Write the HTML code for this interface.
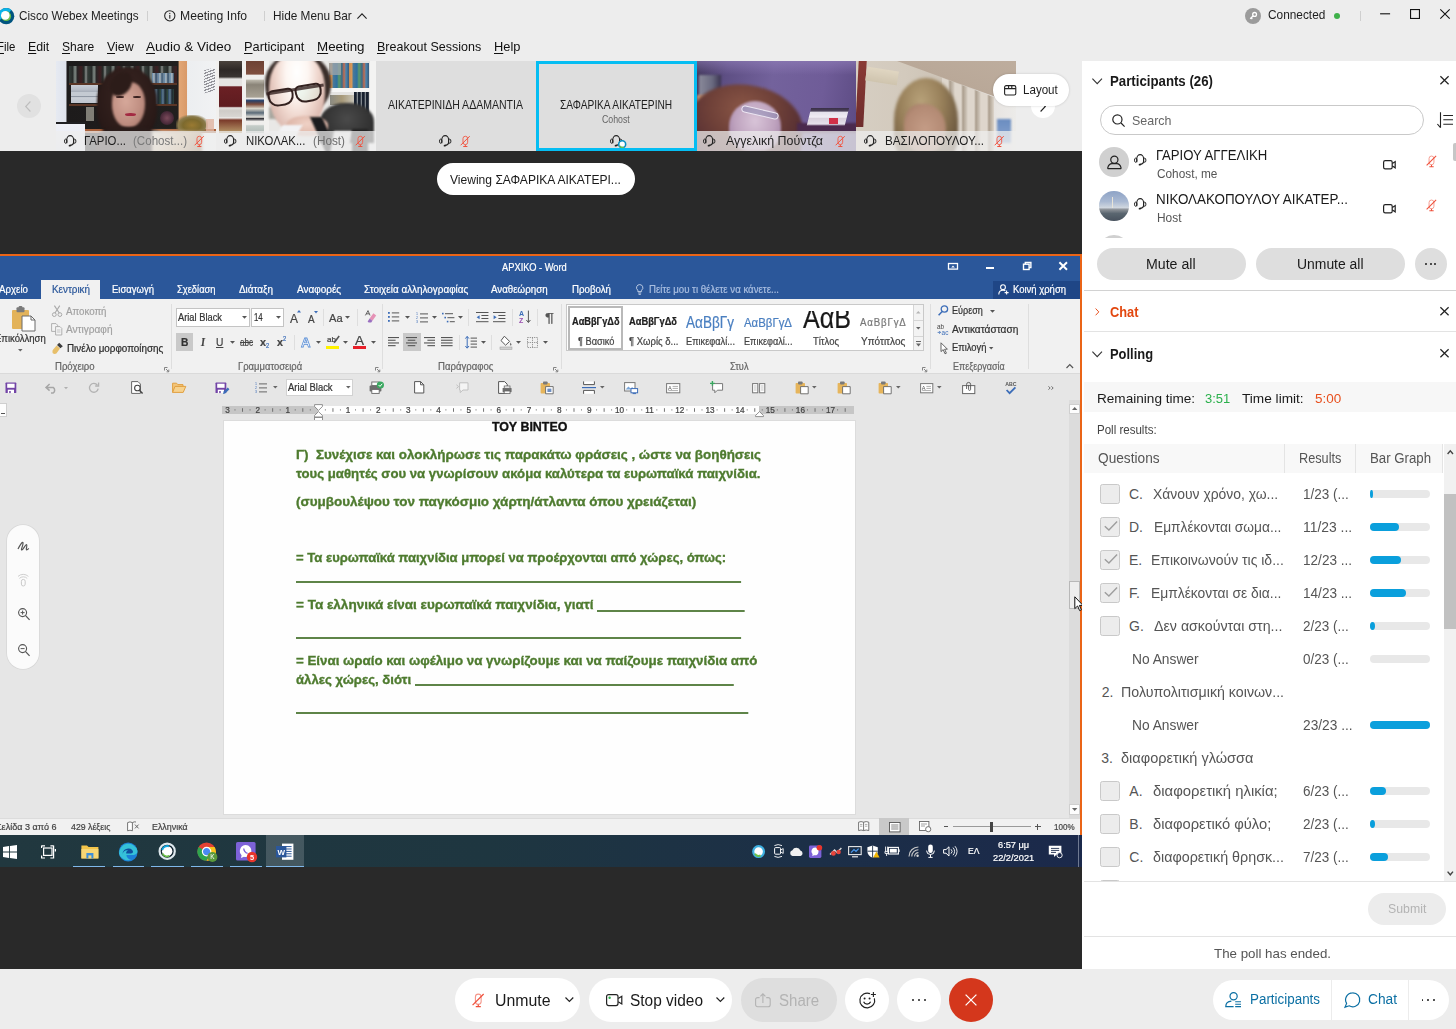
<!DOCTYPE html>
<html lang="en"><head>
<meta charset="utf-8">
<title>Cisco Webex Meetings</title>
<style>
*{box-sizing:border-box;margin:0;padding:0}
html,body{width:1456px;height:1029px;overflow:hidden;background:#ededed;font-family:"Liberation Sans",sans-serif;color:#1e1e1e}
.abs{position:absolute}
#root{position:relative;width:1456px;height:1029px;overflow:hidden;background:#ededed}
.t{position:absolute;white-space:nowrap;line-height:1}
svg{position:absolute;overflow:visible}
/* ===== top bars ===== */
#titlebar{left:0;top:0;width:1456px;height:30px}
#menubar{left:0;top:30px;width:1456px;height:31px}
#menubar .t{color:#111}
.vsep{background:#cfcfcf}
#word{filter:blur(.5px)}
.wt{color:#333;-webkit-text-stroke:.22px}
.dt{-webkit-text-stroke:.35px}
#menubar u{text-decoration-thickness:1px;text-underline-offset:1.5px}
/* ===== video strip ===== */
#strip{left:0;top:61px;width:1082px;height:90px}
.tile{position:absolute;overflow:hidden;background:#dedede}
.tile .lbl{position:absolute;left:0;bottom:0;width:100%;height:19.6px;background:rgba(238,238,238,.74)}
.ph{position:absolute;left:0;top:0;width:100%;height:100%}
/* ===== stage ===== */
#stage{left:0;top:150.6px;width:1081.8px;height:819.2px;background:#292929}
/* ===== right panel ===== */
#panel{left:1082px;top:60.8px;width:374px;height:908.6px;background:#fff}
/* ===== bottom ===== */
#bottom{left:0;top:969.4px;width:1456px;height:60px;background:#ededed}
</style>
</head>
<body>
<div id="root">


<!-- TITLEBAR -->
<div id="titlebar" class="abs">
<svg viewBox="0 0 16.4 16.4" style="position: absolute; left: -2.2px; top: 7.5px; width: 16.4px; height: 16.4px;"><circle cx="8.2" cy="8.2" r="8.1" fill="#00547f"></circle><path d="M2.61 11.43A6.45 6.45 0 0 1 12.35 3.26" fill="none" stroke="#0ab4e8" stroke-width="3.3"></path><circle cx="8.2" cy="8.2" r="4.9" fill="#6cc04a"></circle><circle cx="7.3" cy="7.4" r="4.3" fill="#fff"></circle></svg>
<span class="t" style="font-size: 12.6px; top: 9.81px; left: 19.2px; transform-origin: 0px 50%; transform: scaleX(0.93);">Cisco Webex Meetings</span>
<div class="vsep" style="position: absolute; left: 147px; top: 11px; width: 1px; height: 10px;"></div>
<svg viewBox="0 0 12 12" style="position: absolute; left: 164px; top: 10px; width: 11.6px; height: 11.6px;"><circle cx="6" cy="6" r="5.3" fill="none" stroke="#222" stroke-width="1.1"></circle><rect x="5.45" y="5.1" width="1.1" height="3.9" fill="#222"></rect><rect x="5.45" y="3" width="1.1" height="1.2" fill="#222"></rect></svg>
<span class="t" style="font-size: 12.6px; top: 9.81px; left: 180.4px; transform-origin: 0px 50%; transform: scaleX(0.968);">Meeting Info</span>
<div class="vsep" style="position: absolute; left: 264px; top: 11px; width: 1px; height: 10px;"></div>
<span class="t" style="font-size: 12.6px; top: 9.81px; left: 273.1px; transform-origin: 0px 50%; transform: scaleX(0.938);">Hide Menu Bar</span>
<svg viewBox="0 0 10 6" style="position: absolute; left: 357px; top: 13px; width: 10px; height: 6px;"><path d="M0.4 5.6L5 0.8L9.6 5.6" fill="none" stroke="#222" stroke-width="1.1"></path></svg>
<svg viewBox="0 0 16 16" style="position: absolute; left: 1245px; top: 7.8px; width: 16px; height: 16px;"><circle cx="8" cy="8" r="8" fill="#9b9b9b"></circle><circle cx="9.6" cy="6.4" r="1.9" fill="none" stroke="#fff" stroke-width="1.3"></circle><path d="M8.3 7.7L5.2 10.8M6.2 9.9L7.3 11" stroke="#fff" stroke-width="1.3" fill="none"></path></svg>
<span class="t" style="font-size: 12.8px; top: 8.9px; left: 1268.3px; transform-origin: 0px 50%; transform: scaleX(0.926);">Connected</span>
<div style="border-radius: 50%; background: rgb(63, 177, 74); position: absolute; left: 1333.8px; top: 12.8px; width: 6.4px; height: 6.4px;"></div>
<div class="vsep" style="position: absolute; left: 1360px; top: 11px; width: 1px; height: 10px;"></div>
<svg viewBox="0 0 10 10" style="position: absolute; left: 1379.8px; top: 9px; width: 10.2px; height: 10px;"><path d="M0 4.8H10" stroke="#111" stroke-width="1.1"></path></svg>
<svg viewBox="0 0 10 10" style="position: absolute; left: 1410px; top: 9px; width: 10px; height: 10px;"><rect x="0.55" y="0.55" width="8.9" height="8.9" fill="none" stroke="#111" stroke-width="1.1"></rect></svg>
<svg viewBox="0 0 10 10" style="position: absolute; left: 1439.8px; top: 9px; width: 10px; height: 10px;"><path d="M0.3 0.3L9.7 9.7M9.7 0.3L0.3 9.7" stroke="#111" stroke-width="1.1"></path></svg>
</div>

<!-- MENUBAR -->
<div id="menubar" class="abs">
<span class="t" style="font-size: 13px; top: 10.01px; left: -3.4px; transform-origin: 0px 50%; transform: scaleX(0.877);"><u>F</u>ile</span>
<span class="t" style="font-size: 13px; top: 10.01px; left: 28.3px; transform-origin: 0px 50%; transform: scaleX(0.951);"><u>E</u>dit</span>
<span class="t" style="font-size: 13px; top: 10.01px; left: 62px; transform-origin: 0px 50%; transform: scaleX(0.928);"><u>S</u>hare</span>
<span class="t" style="font-size: 13px; top: 10.01px; left: 107.1px; transform-origin: 0px 50%; transform: scaleX(0.952);"><u>V</u>iew</span>
<span class="t" style="font-size: 13px; top: 10.01px; left: 146.2px; transform-origin: 0px 50%; transform: scaleX(1.036);"><u>A</u>udio &amp; Video</span>
<span class="t" style="font-size: 13px; top: 10.01px; left: 244.2px; transform-origin: 0px 50%; transform: scaleX(0.983);"><u>P</u>articipant</span>
<span class="t" style="font-size: 13px; top: 10.01px; left: 317.3px; transform-origin: 0px 50%; transform: scaleX(1.027);"><u>M</u>eeting</span>
<span class="t" style="font-size: 13px; top: 10.01px; left: 377.3px; transform-origin: 0px 50%; transform: scaleX(0.961);"><u>B</u>reakout Sessions</span>
<span class="t" style="font-size: 13px; top: 10.01px; left: 494.2px; transform-origin: 0px 50%; transform: scaleX(0.987);"><u>H</u>elp</span>
</div>

<!-- VIDEO STRIP -->
<div id="strip" class="abs">
<div style="border-radius: 50%; background: rgb(225, 225, 225); position: absolute; left: 17px; top: 33px; width: 24px; height: 24px;"></div>
<svg viewBox="0 0 6 11" style="position: absolute; left: 25px; top: 39.5px; width: 6px; height: 11px;"><path d="M5.4 0.5L0.7 5.5L5.4 10.5" fill="none" stroke="#bdbdbd" stroke-width="1.1"></path></svg>

<div class="tile" id="tile1" style="position: absolute; left: 56.3px; top: -0.3px; width: 159.7px; height: 89.9px;">
  <div class="ph" style="background:linear-gradient(90deg,#e6eaf2 0,#dfe3ec 6.3%,#1d1b1b 6.8%,#211f1e 76.4%,#e2a776 76.8%,#d99a69 81.6%,#eceef0 82.2%,#f1f2f3 100%)"></div>
  <div class="ph" style="left:13px;top:5px;width:108px;height:17px;background:repeating-linear-gradient(90deg,#3c4a44 0,#2a302e 4px,#8a9892 5px,#9aa6a0 7px,#2b2a2a 8px,#4a2024 12px,#26302c 15px,#b4bcb8 17px,#303634 19px);opacity:.7"></div>
  <div class="ph" style="left:96px;top:12px;width:22px;height:10px;background:repeating-linear-gradient(90deg,#5a86b0 0,#c8d4dc 2px,#2f4f6f 4px,#8aa4b8 6px);opacity:.85"></div>
  <div class="ph" style="left:13px;top:22px;width:108px;height:2px;background:#5a3626"></div>
  <div class="ph" style="left:13px;top:43px;width:108px;height:2px;background:#5a3626"></div>
  <div class="ph" style="left:15px;top:24px;width:27px;height:18px;background:linear-gradient(180deg,#c9ced6 0,#b4bac4 30%,#9aa2ae 34%,#c4cad2 40%,#c4cad2 60%,#8e96a2 64%,#c9ced6 70%,#bfc5ce 100%)"></div>
  <div class="ph" style="left:98px;top:28px;width:20px;height:15px;background:repeating-linear-gradient(90deg,#2a4a6a 0,#6f94b0 2px,#1c2a34 4px,#3a5a4a 7px);opacity:.8"></div>
  <div class="ph" style="left:30px;top:46px;width:8px;height:14px;background:#a9a89c;opacity:.7"></div>
  <div class="ph" style="left:104px;top:50px;width:14px;height:14px;border-radius:50%;background:radial-gradient(circle,#7a4a5a 0,#4a2a3a 60%,rgba(40,30,30,0) 100%)"></div>
  <div class="ph" style="left:148px;top:8px;width:11px;height:23px;background:repeating-linear-gradient(170deg,#7c7c84 0,#7c7c84 1.2px,#eef0f2 1.2px,#eef0f2 2.8px);opacity:.8;transform:skewY(-12deg)"></div>
  <div class="ph" style="left:0;top:61.5px;width:29px;height:30px;background:linear-gradient(180deg,#202022 0,#202022 2px,#eef0f6 2.5px,#e8eaf2 100%)"></div>
  <div class="ph" style="left:29px;top:68px;width:131px;height:4px;background:#a8603a"></div>
  <div class="ph" style="left:120px;top:54px;width:32px;height:17px;background:radial-gradient(ellipse at 50% 60%,#9a7a32 0,#7d6a2e 40%,#8a7a4a 60%,rgba(138,122,74,0) 78%)"></div>
  <div class="ph" style="left:150px;top:58px;width:8px;height:12px;background:#e0b4a0;opacity:.8"></div>
  <div class="ph" style="left:41px;top:6px;width:60px;height:72px;border-radius:48% 48% 38% 38%;background:radial-gradient(ellipse at 50% 40%,#3a2622 0,#2a1a18 70%,#201514 100%);filter:blur(1.1px)"></div>
  <div class="ph" style="left:56px;top:21px;width:33px;height:46px;border-radius:44% 44% 50% 50%;background:radial-gradient(ellipse at 42% 42%,#d6a89a 0,#c08f82 55%,#9d6f64 100%);filter:blur(.9px)"></div>
  <div class="ph" style="left:55px;top:10px;width:20px;height:26px;border-radius:60% 40% 60% 40%;background:#2c1c19;transform:rotate(24deg);filter:blur(1px)"></div>
  <div class="ph" style="left:60px;top:35px;width:8px;height:2.4px;border-radius:50%;background:#3a2220;filter:blur(.4px)"></div>
  <div class="ph" style="left:77px;top:35px;width:8px;height:2.4px;border-radius:50%;background:#3a2220;filter:blur(.4px)"></div>
  <div class="ph" style="left:68.5px;top:52.4px;width:11px;height:3.4px;border-radius:50%;background:#a32a42;filter:blur(.3px)"></div>
  <div class="ph" style="left:40px;top:66px;width:70px;height:30px;border-radius:40% 40% 0 0;background:#2a1c1a;filter:blur(1px)"></div>
  <div class="ph" style="left:96px;top:70px;width:50px;height:22px;background:linear-gradient(120deg,#e8dcc8,#c8a880 60%,#8a6a4a);filter:blur(1.4px)"></div>
  <div class="lbl"></div>
  <svg viewBox="0 0 12.4 12.4" style="position: absolute; left: 7.70312px; top: 74.4969px; width: 12.4px; height: 12.4px;"><path d="M2.8 8.3V4.5A3.4 3.9 0 0 1 9.6 4.5V7.6Q9.4 9.8 6.6 10.4" fill="none" stroke="#222" stroke-width="1.1"></path><ellipse cx="1.7" cy="6.2" rx="1.2" ry="2.1" fill="none" stroke="#222" stroke-width="1"></ellipse><ellipse cx="10.7" cy="6.2" rx="1.2" ry="2.1" fill="none" stroke="#222" stroke-width="1"></ellipse><ellipse cx="5.9" cy="10.6" rx="1.3" ry="0.9" fill="#222" transform="rotate(-20 5.9 10.6)"></ellipse></svg>
  <span class="t" style="font-size: 13px; top: 73.61px; left: 27.7px; transform-origin: 0px 50%; transform: scaleX(0.877);">ΓΑΡΙΟ...</span>
  <span class="t" style="color: rgb(122, 122, 122); font-size: 13px; top: 73.61px; left: 76.4px; transform-origin: 0px 50%; transform: scaleX(0.89);">(Cohost...)</span>
  <svg viewBox="0 0 10 13" style="position: absolute; left: 138.303px; top: 73.8969px; width: 9px; height: 12.6px;"><rect x="2.2" y="0.9" width="5.2" height="9.3" rx="2.6" fill="none" stroke="#f0604e" stroke-width="1.05"></rect><path d="M4.8 10.3V12.2M2.5 12.3H7.1" fill="none" stroke="#ef4f3a" stroke-width="1.1"></path><path d="M9.7 0.8L-0.4 10.9" stroke="#ef4f3a" stroke-width="1.1"></path></svg>
</div>

<div class="tile" id="tile2" style="position: absolute; left: 216px; top: -0.3px; width: 160px; height: 89.9px;">
  <div class="ph" style="background:#e9e8e6"></div>
  <div class="ph" style="left:2px;top:0;width:24px;height:72px;background:linear-gradient(180deg,#4a423c 0,#2e2826 12%,#3a3432 22%,#e6e4e2 25%,#e6e4e2 34%,#6b2024 36%,#5e1c20 63%,#e2e0de 65%,#cfccc8 69%,#d8d5d2 77%,#ecebe9 79%,#7a3a2a 82%,#b89a6a 100%)"></div>
  <div class="ph" style="left:0;top:0;width:3px;height:72px;background:#f1f0ee"></div>
  <div class="ph" style="left:26px;top:0;width:4px;height:72px;background:#f1f0ee"></div>
  <div class="ph" style="left:30px;top:0;width:18px;height:72px;background:linear-gradient(180deg,#6e4234 0,#7e4e3e 18%,#efeeec 20%,#efeeec 25%,#b8b4a8 27%,#8a8478 33%,#a8a294 50%,#efeeec 52%,#26406a 55%,#7a4a3a 60%,#d8d4c8 66%,#5a6a78 72%,#e4e2dc 78%,#2a2a30 80%,#efeeec 84%,#efeeec 88%,#c4ccc8 90%,#b0bab6 100%)"></div>
  <div class="ph" style="left:48px;top:0;width:5px;height:72px;background:#f1f0ee"></div>
  <div class="ph" style="left:53px;top:46px;width:14px;height:12px;background:#a8a8a0;filter:blur(1px)"></div>
  <div class="ph" style="left:112px;top:0;width:42px;height:72px;background:#e4e3e1"></div>
  <div class="ph" style="left:113px;top:2px;width:40px;height:25px;background:repeating-linear-gradient(90deg,#c88a50 0,#d89a5a 3px,#4a7a9a 4px,#2f6f9f 8px,#5a9a6a 10px,#3a6a8a 13px,#c86a4a 15px,#4a86b0 17px,#3a5a7a 20px)"></div>
  <div class="ph" style="left:113px;top:2px;width:12px;height:12px;background:#9aa4aa;opacity:.8"></div>
  <div class="ph" style="left:112px;top:27px;width:42px;height:4.4px;background:#f6f6f5"></div>
  <div class="ph" style="left:114px;top:34px;width:24px;height:10px;background:linear-gradient(90deg,#8a8a82,#a89a7a 50%,#c8c4b8);filter:blur(.6px)"></div>
  <div class="ph" style="left:138px;top:31px;width:15px;height:22px;background:repeating-linear-gradient(90deg,#1a2230 0,#1a2230 2.4px,#d8dcdc 3px,#2a3440 4px)"></div>
  <div class="ph" style="left:154px;top:0;width:6px;height:90px;background:#f3f3f2"></div>
  <div class="ph" style="left:104px;top:42px;width:54px;height:40px;border-radius:46% 46% 0 0;background:radial-gradient(ellipse at 50% 40%,#4a4a4a 0,#333 60%,#2a2a2a 100%);filter:blur(1px)"></div>
  <div class="ph" style="left:49px;top:-8px;width:66px;height:62px;border-radius:48%;background:#3a2e2a;filter:blur(1.3px)"></div>
  <div class="ph" style="left:53px;top:-6px;width:56px;height:78px;border-radius:42% 42% 50% 50%;background:radial-gradient(ellipse at 50% 22%,#ffffff 0,#fdf6f2 28%,#f0d8cf 52%,#d8b4aa 80%,#c09a90 100%);filter:blur(1px)"></div>
  <div class="ph" style="left:52px;top:28px;width:26px;height:17px;border:2.6px solid #33211f;border-radius:5px 5px 10px 10px;transform:rotate(-9deg);background:rgba(255,255,255,.25)"></div>
  <div class="ph" style="left:79px;top:23px;width:27px;height:18px;border:2.6px solid #33211f;border-radius:5px 5px 10px 10px;transform:rotate(-9deg);background:rgba(210,240,225,.35)"></div>
  <div class="ph" style="left:50px;top:27px;width:58px;height:3px;background:#33211f;transform:rotate(-9deg);opacity:.8"></div>
  <div class="ph" style="left:78px;top:58px;width:22px;height:4px;border-radius:50%;background:#c98a8a;filter:blur(.8px)"></div>
  <div class="ph" style="left:70px;top:55px;width:42px;height:20px;border-radius:45%;background:radial-gradient(ellipse at 50% 40%,#f0d2c6 0,#dcb4a6 70%,#c49a8c 100%);filter:blur(1px)"></div>
  <div class="ph" style="left:58px;top:64px;width:20px;height:30px;background:#f2f2f4;transform:skewX(-30deg);filter:blur(.8px)"></div>
  <div class="ph" style="left:102px;top:56px;width:12px;height:36px;background:#1c1c1e;transform:skewX(24deg);filter:blur(.8px)"></div>
  <div class="ph" style="left:116px;top:70px;width:18px;height:22px;background:#e6e6e6;transform:skewX(-10deg);filter:blur(.8px)"></div>
  <div class="ph" style="left:136px;top:68px;width:16px;height:24px;background:#222;filter:blur(.8px)"></div>
  <div class="lbl"></div>
  <svg viewBox="0 0 12.4 12.4" style="position: absolute; left: 8px; top: 74.4969px; width: 12.4px; height: 12.4px;"><path d="M2.8 8.3V4.5A3.4 3.9 0 0 1 9.6 4.5V7.6Q9.4 9.8 6.6 10.4" fill="none" stroke="#222" stroke-width="1.1"></path><ellipse cx="1.7" cy="6.2" rx="1.2" ry="2.1" fill="none" stroke="#222" stroke-width="1"></ellipse><ellipse cx="10.7" cy="6.2" rx="1.2" ry="2.1" fill="none" stroke="#222" stroke-width="1"></ellipse><ellipse cx="5.9" cy="10.6" rx="1.3" ry="0.9" fill="#222" transform="rotate(-20 5.9 10.6)"></ellipse></svg>
  <span class="t" style="font-size: 13px; top: 73.61px; left: 30.3px; transform-origin: 0px 50%; transform: scaleX(0.873);">ΝΙΚΟΛΑΚ...</span>
  <span class="t" style="color: rgb(110, 110, 110); font-size: 13px; top: 73.61px; left: 96.5px; transform-origin: 0px 50%; transform: scaleX(0.904);">(Host)</span>
  <svg viewBox="0 0 10 13" style="position: absolute; left: 139.6px; top: 73.8969px; width: 9px; height: 12.6px;"><rect x="2.2" y="0.9" width="5.2" height="9.3" rx="2.6" fill="none" stroke="#f0604e" stroke-width="1.05"></rect><path d="M4.8 10.3V12.2M2.5 12.3H7.1" fill="none" stroke="#ef4f3a" stroke-width="1.1"></path><path d="M9.7 0.8L-0.4 10.9" stroke="#ef4f3a" stroke-width="1.1"></path></svg>
</div>

<div class="tile" id="tile3" style="position: absolute; left: 376px; top: -0.3px; width: 160px; height: 89.9px;">
  <span class="t" style="font-size: 12.6px; top: 38.5px; left: 12px; transform-origin: 0px 50%; transform: scaleX(0.836);">ΑΙΚΑΤΕΡΙΝΙΔΗ ΑΔΑΜΑΝΤΙΑ</span>
  <svg viewBox="0 0 12.4 12.4" style="position: absolute; left: 63px; top: 74.4969px; width: 12.4px; height: 12.4px;"><path d="M2.8 8.3V4.5A3.4 3.9 0 0 1 9.6 4.5V7.6Q9.4 9.8 6.6 10.4" fill="none" stroke="#222" stroke-width="1.1"></path><ellipse cx="1.7" cy="6.2" rx="1.2" ry="2.1" fill="none" stroke="#222" stroke-width="1"></ellipse><ellipse cx="10.7" cy="6.2" rx="1.2" ry="2.1" fill="none" stroke="#222" stroke-width="1"></ellipse><ellipse cx="5.9" cy="10.6" rx="1.3" ry="0.9" fill="#222" transform="rotate(-20 5.9 10.6)"></ellipse></svg>
  <svg viewBox="0 0 10 13" style="position: absolute; left: 84.6px; top: 73.8969px; width: 9px; height: 12.6px;"><rect x="2.2" y="0.9" width="5.2" height="9.3" rx="2.6" fill="none" stroke="#f0604e" stroke-width="1.05"></rect><path d="M4.8 10.3V12.2M2.5 12.3H7.1" fill="none" stroke="#ef4f3a" stroke-width="1.1"></path><path d="M9.7 0.8L-0.4 10.9" stroke="#ef4f3a" stroke-width="1.1"></path></svg>
</div>

<div class="tile" id="tile4" style="border: 3px solid rgb(5, 189, 242); position: absolute; left: 536px; top: -0.3px; width: 160.5px; height: 89.9px;">
  <span class="t" style="font-size: 12.6px; top: 35.5px; left: 20.8px; transform-origin: 0px 50%; transform: scaleX(0.809);">ΣΑΦΑΡΙΚΑ ΑΙΚΑΤΕΡΙΝΗ</span>
  <span class="t" style="color: rgb(102, 102, 102); font-size: 10.6px; top: 49.9px; left: 63px; transform-origin: 0px 50%; transform: scaleX(0.828);">Cohost</span>
  <svg viewBox="0 0 12.4 12.4" style="position: absolute; left: 71px; top: 71.4969px; width: 12.4px; height: 12.4px;"><path d="M2.8 8.3V4.5A3.4 3.9 0 0 1 9.6 4.5V7.6Q9.4 9.8 6.6 10.4" fill="none" stroke="#222" stroke-width="1.1"></path><ellipse cx="1.7" cy="6.2" rx="1.2" ry="2.1" fill="none" stroke="#222" stroke-width="1"></ellipse><ellipse cx="10.7" cy="6.2" rx="1.2" ry="2.1" fill="none" stroke="#222" stroke-width="1"></ellipse><ellipse cx="5.9" cy="10.6" rx="1.3" ry="0.9" fill="#222" transform="rotate(-20 5.9 10.6)"></ellipse></svg>
  <svg viewBox="0 0 8 8" style="position: absolute; left: 79px; top: 76.0969px; width: 8.4px; height: 8.4px;"><circle cx="4" cy="4" r="3.3" fill="#fff" stroke="#0a8fc0" stroke-width="1.5"></circle><path d="M1.6 5.6A3.2 3.2 0 0 0 5.5 6.8" stroke="#6cc04a" stroke-width="1.4" fill="none"></path></svg>
</div>

<div class="tile" id="tile5" style="position: absolute; left: 696.5px; top: -0.3px; width: 159.5px; height: 89.9px;">
  <div class="ph" style="background:linear-gradient(100deg,#3f3558 0,#5e4f84 18%,#73629c 45%,#6f5c98 75%,#5b4a82 100%)"></div>
  <div class="ph" style="left:0;top:0;width:160px;height:14px;background:linear-gradient(180deg,rgba(150,130,190,.55),rgba(150,130,190,0))"></div>
  <div class="ph" style="left:2px;top:14px;width:22px;height:22px;background:linear-gradient(90deg,#8a8a9a,#6a6a80 60%,#3a3450);filter:blur(1.2px)"></div>
  <div class="ph" style="left:0;top:34px;width:14px;height:8px;background:#c89878;filter:blur(1.2px)"></div>
  <div class="ph" style="left:-6px;top:24px;width:112px;height:76px;border-radius:46% 54% 20% 20%;background:radial-gradient(ellipse at 45% 32%,#8a5646 0,#6e4038 40%,#522c32 75%,#3e2430 100%);filter:blur(1.8px);transform:rotate(6deg)"></div>
  <div class="ph" style="left:32px;top:40px;width:52px;height:50px;border-radius:50% 50% 40% 40%;background:radial-gradient(ellipse at 50% 40%,#d8c4d8 0,#bea2be 55%,#94749a 100%);filter:blur(1.3px)"></div>
  <div class="ph" style="left:44px;top:48px;width:38px;height:7px;border:1.5px solid #ece6f2;border-radius:4px;transform:rotate(13deg);background:rgba(110,120,170,.35)"></div>
  <div class="ph" style="left:100px;top:62px;width:60px;height:10px;background:#4a2a4e;filter:blur(1px)"></div>
  <div class="ph" style="left:112px;top:47px;width:38px;height:17px;background:linear-gradient(180deg,#3a3048 0,#4a4058 18%,#e4e0ea 24%,#f0ecf4 55%,#d8d0dc 60%,#e8e4ee 100%);transform:skewX(-14deg);filter:blur(.7px)"></div>
  <div class="ph" style="left:132px;top:57px;width:9px;height:6px;background:#d03048;filter:blur(.5px)"></div>
  <div class="lbl"></div>
  <svg viewBox="0 0 12.4 12.4" style="position: absolute; left: 6.9px; top: 74.4969px; width: 12.4px; height: 12.4px;"><path d="M2.8 8.3V4.5A3.4 3.9 0 0 1 9.6 4.5V7.6Q9.4 9.8 6.6 10.4" fill="none" stroke="#222" stroke-width="1.1"></path><ellipse cx="1.7" cy="6.2" rx="1.2" ry="2.1" fill="none" stroke="#222" stroke-width="1"></ellipse><ellipse cx="10.7" cy="6.2" rx="1.2" ry="2.1" fill="none" stroke="#222" stroke-width="1"></ellipse><ellipse cx="5.9" cy="10.6" rx="1.3" ry="0.9" fill="#222" transform="rotate(-20 5.9 10.6)"></ellipse></svg>
  <span class="t" style="font-size: 13px; top: 73.61px; left: 29.5px; transform-origin: 0px 50%; transform: scaleX(0.955);">Αγγελική Πούντζα</span>
  <svg viewBox="0 0 10 13" style="position: absolute; left: 139.1px; top: 73.8969px; width: 9px; height: 12.6px;"><rect x="2.2" y="0.9" width="5.2" height="9.3" rx="2.6" fill="none" stroke="#f0604e" stroke-width="1.05"></rect><path d="M4.8 10.3V12.2M2.5 12.3H7.1" fill="none" stroke="#ef4f3a" stroke-width="1.1"></path><path d="M9.7 0.8L-0.4 10.9" stroke="#ef4f3a" stroke-width="1.1"></path></svg>
</div>

<div class="tile" id="tile6" style="position: absolute; left: 856px; top: -0.3px; width: 159.6px; height: 89.9px;">
  <div class="ph" style="background:linear-gradient(90deg,#d6cec2 0,#d3cabd 30%,#cbc1b4 60%,#e8e5e2 88%,#ecebe9 100%)"></div>
  <div class="ph" style="left:30px;top:-84px;width:170px;height:80px;background:linear-gradient(180deg,#c2b2a3,#b9a898);transform:rotate(20deg);transform-origin:0 100%"></div>
  <div class="ph" style="left:1px;top:0;width:8px;height:66px;background:linear-gradient(180deg,#8a3a34,#6e2c2c);transform:skewX(-3deg)"></div>
  <div class="ph" style="left:10px;top:8px;width:32px;height:14px;background:linear-gradient(180deg,#e0d6c2,#cfc4ae);transform:rotate(9deg);filter:blur(.7px)"></div>
  <div class="ph" style="left:86px;top:14px;width:52px;height:78px;background:repeating-linear-gradient(90deg,#ded6cc 0,#ded6cc 6px,#ac9f8f 8px,#c7bdb0 11px,#ded6cc 13px);clip-path:polygon(0 4%,100% 29%,100% 100%,0 100%);filter:blur(.6px)"></div>
  <div class="ph" style="left:141px;top:58px;width:14px;height:24px;background:linear-gradient(180deg,#6a8cc0,#8aa6d0);filter:blur(.9px)"></div>
  <div class="ph" style="left:38px;top:17px;width:64px;height:84px;border-radius:50% 50% 30% 30%;background:radial-gradient(ellipse at 42% 30%,#b8a27a 0,#98805a 40%,#6e5a40 75%,#54442f 100%);filter:blur(1.4px)"></div>
  <div class="ph" style="left:48px;top:43px;width:42px;height:50px;border-radius:38% 50% 50% 50%;background:radial-gradient(ellipse at 50% 50%,#c49c86 0,#b38a74 65%,#8e6a56 100%);filter:blur(1.4px)"></div>
  <div class="lbl"></div>
  <svg viewBox="0 0 12.4 12.4" style="position: absolute; left: 7.6px; top: 74.4969px; width: 12.4px; height: 12.4px;"><path d="M2.8 8.3V4.5A3.4 3.9 0 0 1 9.6 4.5V7.6Q9.4 9.8 6.6 10.4" fill="none" stroke="#222" stroke-width="1.1"></path><ellipse cx="1.7" cy="6.2" rx="1.2" ry="2.1" fill="none" stroke="#222" stroke-width="1"></ellipse><ellipse cx="10.7" cy="6.2" rx="1.2" ry="2.1" fill="none" stroke="#222" stroke-width="1"></ellipse><ellipse cx="5.9" cy="10.6" rx="1.3" ry="0.9" fill="#222" transform="rotate(-20 5.9 10.6)"></ellipse></svg>
  <span class="t" style="font-size: 13px; top: 73.61px; left: 29px; transform-origin: 0px 50%; transform: scaleX(0.898);">ΒΑΣΙΛΟΠΟΥΛΟΥ...</span>
  <svg viewBox="0 0 10 13" style="position: absolute; left: 139px; top: 73.8969px; width: 9px; height: 12.6px;"><rect x="2.2" y="0.9" width="5.2" height="9.3" rx="2.6" fill="none" stroke="#f0604e" stroke-width="1.05"></rect><path d="M4.8 10.3V12.2M2.5 12.3H7.1" fill="none" stroke="#ef4f3a" stroke-width="1.1"></path><path d="M9.7 0.8L-0.4 10.9" stroke="#ef4f3a" stroke-width="1.1"></path></svg>
</div>

<div style="border-radius: 50%; background: rgb(255, 255, 255); position: absolute; left: 1030.7px; top: 32.7px; width: 24.6px; height: 24.6px;"></div>
<svg viewBox="0 0 6 11" style="position: absolute; left: 1040px; top: 39.5px; width: 6px; height: 11px;"><path d="M0.6 0.5L5.3 5.5L0.6 10.5" fill="none" stroke="#222" stroke-width="1.1"></path></svg>
<div style="border-radius: 16px; background: rgb(255, 255, 255); box-shadow: rgba(0, 0, 0, 0.18) 0px 0px 2.5px; position: absolute; left: 992.7px; top: 13px; width: 76.3px; height: 32.2px;"></div>
<svg viewBox="0 0 12.4 10.6" style="position: absolute; left: 1004px; top: 23.6px; width: 12.4px; height: 10.6px;"><rect x="0.6" y="0.6" width="11.2" height="9.4" rx="1.6" fill="none" stroke="#222" stroke-width="1.1"></rect><path d="M0.6 3.6H11.8M4.6 0.6V3.6M7.8 0.6V3.6" stroke="#222" stroke-width="1.1"></path></svg>
<span class="t" style="font-size: 12.8px; top: 23.4px; left: 1022.7px; transform-origin: 0px 50%; transform: scaleX(0.905);">Layout</span>
</div>

<!-- STAGE -->
<div id="stage" class="abs">
<div style="background: rgb(255, 255, 255); border-radius: 16px; position: absolute; left: 437px; top: 12.4062px; width: 198px; height: 32px;"></div>
<span class="t" style="color: rgb(26, 26, 26); font-size: 12.8px; top: 23.22px; left: 450.2px; transform-origin: 0px 50%; transform: scaleX(0.943);">Viewing ΣΑΦΑΡΙΚΑ ΑΙΚΑΤΕΡΙ...</span>
<!-- WORD -->
<div id="word" style="overflow: hidden; position: absolute; left: 0px; top: 102.406px; width: 1082px; height: 615px;">
<div style="background: rgb(43, 87, 154); position: absolute; left: 0px; top: 2.6px; width: 1080px; height: 43.9px;"></div>
<span class="t wt" style="color: rgb(255, 255, 255); font-size: 10.8px; top: 8.6px; left: 502.4px; transform-origin: 0px 50%; transform: scaleX(0.863);">ΑΡΧΙΚΟ - Word</span>
<svg viewBox="0 0 10 6.6" style="position: absolute; left: 948px; top: 10px; width: 10px; height: 6.6px;"><rect x="0.5" y="0.5" width="9" height="5.6" fill="none" stroke="#fff" stroke-width="1.3"></rect><path d="M3.2 4.4L5 2.4L6.8 4.4Z" fill="#fff"></path></svg>
<div style="background: rgb(255, 255, 255); position: absolute; left: 986px; top: 14.4px; width: 8px; height: 1.8px;"></div>
<svg viewBox="0 0 8.4 8" style="position: absolute; left: 1022.6px; top: 9px; width: 8.4px; height: 8px;"><rect x="0.5" y="2.2" width="5.6" height="5.3" fill="none" stroke="#fff" stroke-width="1.4"></rect><path d="M2.3 2.2V0.5H7.9V5.6H6.1" fill="none" stroke="#fff" stroke-width="1.4"></path></svg>
<svg viewBox="0 0 8.4 8" style="position: absolute; left: 1059.4px; top: 9px; width: 8.4px; height: 8px;"><path d="M0.4 0.3L8 7.7M8 0.3L0.4 7.7" stroke="#fff" stroke-width="2"></path></svg>
<!-- tabs -->
<div style="background: rgb(241, 241, 241); position: absolute; left: 41.3px; top: 27.2px; width: 59.1px; height: 19.8px;"></div>
<span class="t wt" style="color: rgb(255, 255, 255); font-size: 11px; top: 31.5px; left: -0.6px; transform-origin: 0px 50%; transform: scaleX(0.883);">Αρχείο</span>
<span class="t wt" style="color: rgb(43, 87, 154); font-size: 11px; top: 31.5px; left: 51.5px; transform-origin: 0px 50%; transform: scaleX(0.896);">Κεντρική</span>
<span class="t wt" style="color: rgb(255, 255, 255); font-size: 11px; top: 31.5px; left: 112.3px; transform-origin: 0px 50%; transform: scaleX(0.866);">Εισαγωγή</span>
<span class="t wt" style="color: rgb(255, 255, 255); font-size: 11px; top: 31.5px; left: 177.3px; transform-origin: 0px 50%; transform: scaleX(0.85);">Σχεδίαση</span>
<span class="t wt" style="color: rgb(255, 255, 255); font-size: 11px; top: 31.5px; left: 239px; transform-origin: 0px 50%; transform: scaleX(0.901);">Διάταξη</span>
<span class="t wt" style="color: rgb(255, 255, 255); font-size: 11px; top: 31.5px; left: 297px; transform-origin: 0px 50%; transform: scaleX(0.907);">Αναφορές</span>
<span class="t wt" style="color: rgb(255, 255, 255); font-size: 11px; top: 31.5px; left: 363.7px; transform-origin: 0px 50%; transform: scaleX(0.9);">Στοιχεία αλληλογραφίας</span>
<span class="t wt" style="color: rgb(255, 255, 255); font-size: 11px; top: 31.5px; left: 491.2px; transform-origin: 0px 50%; transform: scaleX(0.886);">Αναθεώρηση</span>
<span class="t wt" style="color: rgb(255, 255, 255); font-size: 11px; top: 31.5px; left: 572px; transform-origin: 0px 50%; transform: scaleX(0.883);">Προβολή</span>
<svg viewBox="0 0 7.4 11" style="position: absolute; left: 635.6px; top: 31px; width: 7.4px; height: 11px;"><path d="M3.7 0.6A3.1 3.1 0 0 0 1.8 6.2V7.6H5.6V6.2A3.1 3.1 0 0 0 3.7 0.6Z" fill="none" stroke="#c9d6ea" stroke-width="0.9"></path><path d="M2.2 9H5.2M2.6 10.4H4.8" stroke="#c9d6ea" stroke-width="0.9"></path></svg>
<span class="t wt" style="color: rgb(169, 190, 224); font-size: 10.6px; top: 31.51px; left: 648.7px; transform-origin: 0px 50%; transform: scaleX(0.911);">Πείτε μου τι θέλετε να κάνετε...</span>
<div style="background: rgb(31, 70, 134); position: absolute; left: 992.6px; top: 27.7px; width: 87.4px; height: 18.8px;"></div>
<svg viewBox="0 0 11 11" style="position: absolute; left: 998px; top: 31.5px; width: 11px; height: 11px;"><circle cx="5" cy="3.2" r="2.4" fill="none" stroke="#fff" stroke-width="1.1"></circle><path d="M0.8 10.4C0.8 7.4 2.6 6.2 5 6.2C6 6.2 6.8 6.4 7.4 6.8" fill="none" stroke="#fff" stroke-width="1.1"></path><path d="M8.6 6.6V10.6M6.6 8.6H10.6" stroke="#fff" stroke-width="1.1"></path></svg>
<span class="t wt" style="color: rgb(255, 255, 255); font-size: 11px; top: 31.5px; left: 1013px; transform-origin: 0px 50%; transform: scaleX(0.862);">Κοινή χρήση</span>

<!-- ribbon -->
<div style="background: rgb(241, 241, 241); position: absolute; left: 0px; top: 46.5px; width: 1080px; height: 74.9px;"></div>
<div style="background: rgb(218, 218, 218); position: absolute; left: 0px; top: 119.8px; width: 1080px; height: 1px;"></div>
<div style="background: rgb(230, 230, 230); position: absolute; left: 0px; top: 120.6px; width: 1080px; height: 26.8px;"></div>
<!--RIBBON-ITEMS-->
<svg viewBox="0 0 25 25" style="position: absolute; left: 11px; top: 53px; width: 25px; height: 25px;"><rect x="1" y="4" width="17" height="19" rx="1" fill="#e3b35a"></rect><rect x="5.5" y="1.2" width="8" height="5" rx="1" fill="#7a7a7a"></rect><rect x="7.6" y="0" width="3.8" height="2.6" rx="1" fill="#7a7a7a"></rect><path d="M11 10H20L24 14V25H11Z" fill="#fff" stroke="#6a6a6a" stroke-width="1"></path><path d="M20 10V14H24" fill="none" stroke="#6a6a6a" stroke-width="1"></path></svg>
<span class="t wt" style="color: rgb(51, 51, 51); font-size: 10.8px; top: 80.01px; left: -5px; transform-origin: 0px 50%; transform: scaleX(0.882);">Επικόλληση</span>
<svg viewBox="0 0 4.6 2.4" style="position: absolute; left: 18.3px; top: 96.4px; width: 4.6px; height: 2.4px;"><path d="M0 0H4.6L2.3 2.4Z" fill="#666"></path></svg>
<svg viewBox="0 0 10.3 12" style="position: absolute; left: 51.7px; top: 52px; width: 10.3px; height: 12px;"><path d="M2.4 0.6L7.4 8.2M7.8 0.6L2.8 8.2" stroke="#a9a9a9" stroke-width="1.1" fill="none"></path><circle cx="2.3" cy="9.6" r="1.9" fill="none" stroke="#a9a9a9" stroke-width="1"></circle><circle cx="7.9" cy="9.6" r="1.9" fill="none" stroke="#a9a9a9" stroke-width="1"></circle></svg>
<span class="t wt" style="color: rgb(162, 162, 162); font-size: 10.6px; top: 52.6px; left: 66px; transform-origin: 0px 50%; transform: scaleX(0.916);">Αποκοπή</span>
<svg viewBox="0 0 11.5 12.5" style="position: absolute; left: 51px; top: 70.5px; width: 11.5px; height: 12.5px;"><path d="M0.6 0.6H5L6.6 2.2V8.4H0.6Z" fill="#f4f4f4" stroke="#a9a9a9" stroke-width="0.9"></path><path d="M4.6 3.6H9L10.8 5.4V12H4.6Z" fill="#f4f4f4" stroke="#a9a9a9" stroke-width="0.9"></path><path d="M6 7H9.4M6 9H9.4" stroke="#b9b9b9" stroke-width="0.8"></path></svg>
<span class="t wt" style="color: rgb(162, 162, 162); font-size: 10.6px; top: 71.21px; left: 66px; transform-origin: 0px 50%; transform: scaleX(0.95);">Αντιγραφή</span>
<svg viewBox="0 0 11.5 13" style="position: absolute; left: 51.7px; top: 89px; width: 11.5px; height: 13px;"><path d="M7.2 0.8L10.8 4.2L8.4 6.2L5 3Z" fill="#3d3d3d"></path><path d="M4.6 3.4L8 6.6L4.4 11.6Q2.2 12.6 0.6 11Q0 8.6 1.2 7.6Z" fill="#e7bf6a"></path></svg>
<span class="t wt" style="color: rgb(43, 43, 43); font-size: 10.6px; top: 90.01px; left: 66.7px; transform-origin: 0px 50%; transform: scaleX(0.931);">Πινέλο μορφοποίησης</span>
<span class="t wt" style="color: rgb(102, 102, 102); font-size: 10.4px; top: 109.01px; left: 55px; transform-origin: 0px 50%; transform: scaleX(0.919);">Πρόχειρο</span>
<svg viewBox="0 0 5.0 5" style="position: absolute; left: 163.6px; top: 114px; width: 5px; height: 5px;"><path d="M0.5 3.5V0.5H3.5" fill="none" stroke="#777" stroke-width="0.9"></path><path d="M2 2L4.6 4.6M4.8 2.6V4.8H2.6" fill="none" stroke="#777" stroke-width="0.9"></path></svg>
<div style="background: rgb(222, 222, 222); position: absolute; left: 171px; top: 51px; width: 1px; height: 65px;"></div>
<div style="background: rgb(255, 255, 255); border: 1px solid rgb(196, 196, 196); position: absolute; left: 175.5px; top: 55px; width: 74px; height: 19px;"></div>
<span class="t wt" style="color: rgb(51, 51, 51); font-size: 10.8px; top: 59.21px; left: 178px; transform-origin: 0px 50%; transform: scaleX(0.862);">Arial Black</span>
<svg viewBox="0 0 5.0 2.8" style="position: absolute; left: 242.1px; top: 63.4px; width: 5px; height: 2.8px;"><path d="M0 0H5L2.5 2.8Z" fill="#555"></path></svg>
<div style="background: rgb(255, 255, 255); border: 1px solid rgb(196, 196, 196); position: absolute; left: 250.6px; top: 55px; width: 33.8px; height: 19px;"></div>
<span class="t wt" style="color: rgb(51, 51, 51); font-size: 10.8px; top: 59.21px; left: 253.8px; transform-origin: 0px 50%; transform: scaleX(0.724);">14</span>
<svg viewBox="0 0 5.0 2.8" style="position: absolute; left: 276.1px; top: 63.4px; width: 5px; height: 2.8px;"><path d="M0 0H5L2.5 2.8Z" fill="#555"></path></svg>
<span class="t wt" style="color: rgb(68, 68, 68); font-size: 12.5px; top: 60.01px; left: 290px; transform-origin: 0px 50%; transform: scaleX(0.959);">A</span>
<svg viewBox="0 0 4 2.5" style="position: absolute; left: 297px; top: 57.5px; width: 4px; height: 2.5px;"><path d="M0 2.5L2 0L4 2.5Z" fill="#3c6db8"></path></svg>
<span class="t wt" style="color: rgb(68, 68, 68); font-size: 10.5px; top: 61px; left: 307.6px; transform-origin: 0px 50%; transform: scaleX(0.941);">A</span>
<svg viewBox="0 0 4.0 2.5" style="position: absolute; left: 313.6px; top: 58.5px; width: 4px; height: 2.5px;"><path d="M0 0L2 2.5L4 0Z" fill="#3c6db8"></path></svg>
<div style="background: rgb(222, 222, 222); position: absolute; left: 323px; top: 56px; width: 1px; height: 17px;"></div>
<span class="t wt" style="color: rgb(68, 68, 68); font-size: 11.5px; top: 60.41px; left: 329.2px; transform-origin: 0px 50%; transform: scaleX(0.966);">Aa</span>
<svg viewBox="0 0 5.0 2.8" style="position: absolute; left: 345.3px; top: 63.4px; width: 5px; height: 2.8px;"><path d="M0 0H5L2.5 2.8Z" fill="#555"></path></svg>
<div style="background: rgb(222, 222, 222); position: absolute; left: 357px; top: 56px; width: 1px; height: 17px;"></div>
<svg viewBox="0 0 11.5 14" style="position: absolute; left: 364.5px; top: 57px; width: 11.5px; height: 14px;"><path d="M4.6 8.6L8.4 3.2L11.2 5.4L7.4 10.8Z" fill="#e592b6"></path><path d="M4.6 8.6L7.4 10.8L6.2 12.4H3.6L2.6 11.4Z" fill="#9a6fc0"></path><path d="M0.4 5.4L3 0.6L5 5.4M1.2 3.8H4.2" fill="none" stroke="#555" stroke-width="0.9"></path></svg>
<div style="background: rgb(222, 222, 222); position: absolute; left: 381.7px; top: 51px; width: 1px; height: 65px;"></div>
<div style="background: rgb(201, 201, 201); position: absolute; left: 175.5px; top: 80.2px; width: 17.5px; height: 18px;"></div>
<span class="t wt" style="color: rgb(51, 51, 51); font-weight: bold; font-size: 11.4px; top: 84.42px; left: 180.6px; transform-origin: 0px 50%; transform: scaleX(0.899);">B</span>
<span class="t wt" style="color: rgb(68, 68, 68); font-style: italic; font-family: &quot;Liberation Serif&quot;, serif; font-weight: bold; font-size: 11.6px; top: 84.4px; left: 200.8px; transform-origin: 0px 50%; transform: scaleX(0.886);">I</span>
<span class="t wt" style="color: rgb(68, 68, 68); text-decoration: underline; font-size: 11px; top: 84px; left: 215.6px; transform-origin: 0px 50%; transform: scaleX(0.93);">U</span>
<svg viewBox="0 0 5.0 2.8" style="position: absolute; left: 230px; top: 88.2px; width: 5px; height: 2.8px;"><path d="M0 0H5L2.5 2.8Z" fill="#555"></path></svg>
<span class="t wt" style="color: rgb(68, 68, 68); text-decoration: line-through; font-size: 10.2px; top: 84.61px; left: 240px; transform-origin: 0px 50%; transform: scaleX(0.791);">abc</span>
<span class="t wt" style="color: rgb(68, 68, 68); font-weight: bold; font-size: 11px; top: 84px; left: 259.6px; transform-origin: 0px 50%; transform: scaleX(0.98);">x</span>
<span class="t wt" style="color: rgb(60, 109, 184); font-size: 6.5px; top: 90.41px; left: 266px; transform-origin: 0px 50%; transform: scaleX(0.883);">2</span>
<span class="t wt" style="color: rgb(68, 68, 68); font-weight: bold; font-size: 11px; top: 84px; left: 276.8px; transform-origin: 0px 50%; transform: scaleX(0.98);">x</span>
<span class="t wt" style="color: rgb(60, 109, 184); font-size: 6.5px; top: 83.41px; left: 283.2px; transform-origin: 0px 50%; transform: scaleX(0.883);">2</span>
<div style="background: rgb(222, 222, 222); position: absolute; left: 293.6px; top: 82px; width: 1px; height: 15px;"></div>
<span class="t wt" style="color: rgb(255, 255, 255); -webkit-text-stroke: 0.8px rgb(91, 143, 214); font-weight: bold; font-size: 13.6px; top: 83px; left: 301px; transform-origin: 0px 50%; transform: scaleX(0.977);">A</span>
<svg viewBox="0 0 5.0 2.8" style="position: absolute; left: 315.5px; top: 88.2px; width: 5px; height: 2.8px;"><path d="M0 0H5L2.5 2.8Z" fill="#555"></path></svg>
<span class="t wt" style="color: rgb(68, 68, 68); font-size: 8px; top: 83.01px; left: 327px; transform-origin: 0px 50%; transform: scaleX(1.011);">ab</span>
<svg viewBox="0 0 7 9.4" style="position: absolute; left: 333px; top: 81.6px; width: 7px; height: 9.4px;"><path d="M5.6 0.4L6.8 1.6L2.4 7.6L0.6 8.6L1 6.6Z" fill="#555"></path></svg>
<div style="background: rgb(255, 242, 0); position: absolute; left: 325.6px; top: 92.6px; width: 13.8px; height: 3.2px;"></div>
<svg viewBox="0 0 5.0 2.8" style="position: absolute; left: 343.3px; top: 88.2px; width: 5px; height: 2.8px;"><path d="M0 0H5L2.5 2.8Z" fill="#555"></path></svg>
<span class="t wt" style="color: rgb(68, 68, 68); font-size: 12.4px; top: 81.61px; left: 355px; transform-origin: 0px 50%; transform: scaleX(1.089);">A</span>
<div style="background: rgb(232, 32, 42); position: absolute; left: 353px; top: 93px; width: 13.4px; height: 3.2px;"></div>
<svg viewBox="0 0 5.0 2.8" style="position: absolute; left: 370.5px; top: 88.2px; width: 5px; height: 2.8px;"><path d="M0 0H5L2.5 2.8Z" fill="#555"></path></svg>
<span class="t wt" style="color: rgb(102, 102, 102); font-size: 10.4px; top: 109.01px; left: 238px; transform-origin: 0px 50%; transform: scaleX(0.909);">Γραμματοσειρά</span>
<svg viewBox="0 0 5.0 5" style="position: absolute; left: 374.6px; top: 114px; width: 5px; height: 5px;"><path d="M0.5 3.5V0.5H3.5" fill="none" stroke="#777" stroke-width="0.9"></path><path d="M2 2L4.6 4.6M4.8 2.6V4.8H2.6" fill="none" stroke="#777" stroke-width="0.9"></path></svg>
<svg viewBox="0 0 11.2 10.0" style="position: absolute; left: 388px; top: 59.4px; width: 11.2px; height: 10px;"><rect x="0" y="0" width="1.8" height="1.8" fill="#3c6db8"></rect><rect x="3.8" y="0.4" width="7.4" height="1" fill="#555"></rect><rect x="0" y="4" width="1.8" height="1.8" fill="#3c6db8"></rect><rect x="3.8" y="4.4" width="7.4" height="1" fill="#555"></rect><rect x="0" y="8" width="1.8" height="1.8" fill="#3c6db8"></rect><rect x="3.8" y="8.4" width="7.4" height="1" fill="#555"></rect></svg>
<svg viewBox="0 0 5.0 2.8" style="position: absolute; left: 404.5px; top: 63.4px; width: 5px; height: 2.8px;"><path d="M0 0H5L2.5 2.8Z" fill="#555"></path></svg>
<svg viewBox="0 0 12.0 11.4" style="position: absolute; left: 415.5px; top: 58.6px; width: 12px; height: 11.4px;"><text x="0" y="3.2" font-size="3.6" fill="#3c6db8" font-family="Liberation Sans,sans-serif">1</text><text x="0" y="7.4" font-size="3.6" fill="#3c6db8" font-family="Liberation Sans,sans-serif">2</text><text x="0" y="11.4" font-size="3.6" fill="#3c6db8" font-family="Liberation Sans,sans-serif">3</text><rect x="4" y="1.4" width="8" height="1" fill="#555"></rect><rect x="4" y="5.4" width="8" height="1" fill="#555"></rect><rect x="4" y="9.4" width="8" height="1" fill="#555"></rect></svg>
<svg viewBox="0 0 5.0 2.8" style="position: absolute; left: 431.5px; top: 63.4px; width: 5px; height: 2.8px;"><path d="M0 0H5L2.5 2.8Z" fill="#555"></path></svg>
<svg viewBox="0 0 12.8 11.4" style="position: absolute; left: 441.7px; top: 58.6px; width: 12.8px; height: 11.4px;"><rect x="0" y="0.8" width="1.6" height="1.6" fill="#3c6db8"></rect><rect x="3" y="1.2" width="8" height="1" fill="#555"></rect><rect x="2.4" y="4.8" width="1.6" height="1.6" fill="#3c6db8"></rect><rect x="5.4" y="5.2" width="7" height="1" fill="#555"></rect><rect x="4.8" y="8.8" width="1.6" height="1.6" fill="#3c6db8"></rect><rect x="7.8" y="9.2" width="5" height="1" fill="#555"></rect></svg>
<svg viewBox="0 0 5.0 2.8" style="position: absolute; left: 458px; top: 63.4px; width: 5px; height: 2.8px;"><path d="M0 0H5L2.5 2.8Z" fill="#555"></path></svg>
<div style="background: rgb(222, 222, 222); position: absolute; left: 467.6px; top: 56px; width: 1px; height: 17px;"></div>
<svg viewBox="0 0 12.5 10.4" style="position: absolute; left: 475.5px; top: 59.4px; width: 12.5px; height: 10.4px;"><path d="M3.6 3.2L0.6 5.2L3.6 7.2Z" fill="#3c6db8"></path><rect x="0" y="0" width="12.5" height="1" fill="#555"></rect><rect x="5.4" y="3" width="7" height="1" fill="#555"></rect><rect x="5.4" y="6" width="7" height="1" fill="#555"></rect><rect x="0" y="9.2" width="12.5" height="1" fill="#555"></rect></svg>
<svg viewBox="0 0 12.5 10.4" style="position: absolute; left: 493.2px; top: 59.4px; width: 12.5px; height: 10.4px;"><path d="M0.6 3.2L3.6 5.2L0.6 7.2Z" fill="#3c6db8"></path><rect x="0" y="0" width="12.5" height="1" fill="#555"></rect><rect x="5.4" y="3" width="7" height="1" fill="#555"></rect><rect x="5.4" y="6" width="7" height="1" fill="#555"></rect><rect x="0" y="9.2" width="12.5" height="1" fill="#555"></rect></svg>
<div style="background: rgb(222, 222, 222); position: absolute; left: 512px; top: 56px; width: 1px; height: 17px;"></div>
<svg viewBox="0 0 12.4 13.6" style="position: absolute; left: 518.6px; top: 57.4px; width: 12.4px; height: 13.6px;"><text x="0" y="6" font-size="7" font-weight="bold" fill="#3c6db8" font-family="Liberation Sans,sans-serif">A</text><text x="0" y="13" font-size="7" font-weight="bold" fill="#9a4fb0" font-family="Liberation Sans,sans-serif">Z</text><path d="M9.4 0.6V12M7.4 10L9.4 12.6L11.4 10" fill="none" stroke="#555" stroke-width="1"></path></svg>
<div style="background: rgb(222, 222, 222); position: absolute; left: 537.3px; top: 56px; width: 1px; height: 17px;"></div>
<span class="t wt" style="color: rgb(85, 85, 85); font-size: 13px; top: 58.01px; left: 544.6px; transform-origin: 0px 50%; transform: scaleX(1.289);">¶</span>
<svg viewBox="0 0 11 10.8" style="position: absolute; left: 388px; top: 84.4px; width: 11px; height: 10.8px;"><rect x="0" y="0.0" width="11" height="1.1" fill="#555"></rect><rect x="0" y="2.7" width="7.6" height="1.1" fill="#555"></rect><rect x="0" y="5.4" width="11" height="1.1" fill="#555"></rect><rect x="0" y="8.100000000000001" width="7.6" height="1.1" fill="#555"></rect></svg>
<div style="background: rgb(201, 201, 201); position: absolute; left: 403px; top: 80.2px; width: 17.8px; height: 18px;"></div>
<svg viewBox="0 0 11.0 10.8" style="position: absolute; left: 406.4px; top: 84.4px; width: 11px; height: 10.8px;"><rect x="0.0" y="0.0" width="11" height="1.1" fill="#555"></rect><rect x="1.7000000000000002" y="2.7" width="7.6" height="1.1" fill="#555"></rect><rect x="0.0" y="5.4" width="11" height="1.1" fill="#555"></rect><rect x="1.7000000000000002" y="8.100000000000001" width="7.6" height="1.1" fill="#555"></rect></svg>
<svg viewBox="0 0 11.0 10.8" style="position: absolute; left: 423.6px; top: 84.4px; width: 11px; height: 10.8px;"><rect x="0" y="0.0" width="11" height="1.1" fill="#555"></rect><rect x="3.4000000000000004" y="2.7" width="7.6" height="1.1" fill="#555"></rect><rect x="0" y="5.4" width="11" height="1.1" fill="#555"></rect><rect x="3.4000000000000004" y="8.100000000000001" width="7.6" height="1.1" fill="#555"></rect></svg>
<svg viewBox="0 0 11.6 10.8" style="position: absolute; left: 441px; top: 84.4px; width: 11.6px; height: 10.8px;"><rect x="0" y="0.0" width="11.6" height="1.1" fill="#555"></rect><rect x="0" y="2.7" width="11.6" height="1.1" fill="#555"></rect><rect x="0" y="5.4" width="11.6" height="1.1" fill="#555"></rect><rect x="0" y="8.100000000000001" width="11.6" height="1.1" fill="#555"></rect></svg>
<div style="background: rgb(222, 222, 222); position: absolute; left: 459.3px; top: 82px; width: 1px; height: 15px;"></div>
<svg viewBox="0 0 12 13" style="position: absolute; left: 465px; top: 83px; width: 12px; height: 13px;"><path d="M2.2 0.6V12M0.4 2.6L2.2 0.4L4 2.6M0.4 10L2.2 12.2L4 10" fill="none" stroke="#3c6db8" stroke-width="1"></path><rect x="5.6" y="1.6" width="6.4" height="1" fill="#555"></rect><rect x="5.6" y="4.6" width="6.4" height="1" fill="#555"></rect><rect x="5.6" y="7.6" width="6.4" height="1" fill="#555"></rect><rect x="5.6" y="10.6" width="6.4" height="1" fill="#555"></rect></svg>
<svg viewBox="0 0 5.0 2.8" style="position: absolute; left: 480.5px; top: 88.2px; width: 5px; height: 2.8px;"><path d="M0 0H5L2.5 2.8Z" fill="#555"></path></svg>
<div style="background: rgb(222, 222, 222); position: absolute; left: 491px; top: 82px; width: 1px; height: 15px;"></div>
<svg viewBox="0 0 12.4 14.6" style="position: absolute; left: 500px; top: 82px; width: 12.4px; height: 14.6px;"><path d="M4.4 1.2L9.6 6.4L5.6 10.2L1 5.6Z" fill="#fff" stroke="#555" stroke-width="1"></path><path d="M10.6 7.4Q12.2 9.6 11 10.6Q9.6 10.4 10.6 7.4Z" fill="#555"></path><rect x="0" y="12" width="12" height="2.4" fill="#cfcfcf" stroke="#999" stroke-width="0.5"></rect></svg>
<svg viewBox="0 0 5.0 2.8" style="position: absolute; left: 515.5px; top: 88.2px; width: 5px; height: 2.8px;"><path d="M0 0H5L2.5 2.8Z" fill="#555"></path></svg>
<svg viewBox="0 0 11 11.0" style="position: absolute; left: 527px; top: 83.6px; width: 11px; height: 11px;"><rect x="0.5" y="0.5" width="10" height="10" fill="none" stroke="#888" stroke-width="0.9" stroke-dasharray="1.2 1"></rect><path d="M5.5 0.5V10.5M0.5 5.5H10.5" stroke="#888" stroke-width="0.9" stroke-dasharray="1.2 1"></path></svg>
<svg viewBox="0 0 5.0 2.8" style="position: absolute; left: 543.1px; top: 88.2px; width: 5px; height: 2.8px;"><path d="M0 0H5L2.5 2.8Z" fill="#555"></path></svg>
<span class="t wt" style="color: rgb(102, 102, 102); font-size: 10.4px; top: 109.01px; left: 437.6px; transform-origin: 0px 50%; transform: scaleX(0.922);">Παράγραφος</span>
<svg viewBox="0 0 5.0 5" style="position: absolute; left: 552.6px; top: 114px; width: 5px; height: 5px;"><path d="M0.5 3.5V0.5H3.5" fill="none" stroke="#777" stroke-width="0.9"></path><path d="M2 2L4.6 4.6M4.8 2.6V4.8H2.6" fill="none" stroke="#777" stroke-width="0.9"></path></svg>
<div style="background: rgb(222, 222, 222); position: absolute; left: 561.4px; top: 51px; width: 1px; height: 65px;"></div>
<div style="background: rgb(255, 255, 255); border: 1px solid rgb(201, 201, 201); position: absolute; left: 566.2px; top: 51.4px; width: 358.2px; height: 47px;"></div>
<div style="border: 2px solid rgb(185, 185, 185); background: rgb(255, 255, 255); position: absolute; left: 568px; top: 53px; width: 55.4px; height: 43.6px;"></div>
<span class="t wt" style="color: rgb(34, 34, 34); font-weight: bold; font-size: 10px; top: 64px; left: 572px; transform-origin: 0px 50%; transform: scaleX(0.922);">ΑαΒβΓγΔδ</span>
<span class="t wt" style="color: rgb(68, 68, 68); font-size: 10.4px; top: 83.62px; left: 577.5px; transform-origin: 0px 50%; transform: scaleX(0.891);">¶ Βασικό</span>
<span class="t wt" style="color: rgb(34, 34, 34); font-weight: bold; font-size: 10px; top: 64px; left: 629px; transform-origin: 0px 50%; transform: scaleX(0.931);">ΑαΒβΓγΔδ</span>
<span class="t wt" style="color: rgb(68, 68, 68); font-size: 10.4px; top: 83.62px; left: 628.5px; transform-origin: 0px 50%; transform: scaleX(0.915);">¶ Χωρίς δ...</span>
<span class="t wt" style="color: rgb(74, 127, 192); font-size: 16.6px; top: 61.6px; left: 686px; transform-origin: 0px 50%; transform: scaleX(0.817);">ΑαΒβΓγ</span>
<span class="t wt" style="color: rgb(68, 68, 68); font-size: 10.4px; top: 83.62px; left: 686px; transform-origin: 0px 50%; transform: scaleX(0.888);">Επικεφαλί...</span>
<span class="t wt" style="color: rgb(74, 127, 192); font-size: 13.4px; top: 62.61px; left: 744px; transform-origin: 0px 50%; transform: scaleX(0.852);">ΑαΒβΓγΔ</span>
<span class="t wt" style="color: rgb(68, 68, 68); font-size: 10.4px; top: 83.62px; left: 743.6px; transform-origin: 0px 50%; transform: scaleX(0.878);">Επικεφαλί...</span>
<div style="overflow: hidden; position: absolute; left: 800px; top: 57.6px; width: 53px; height: 19.4px;"><span class="t wt" style="color: rgb(26, 26, 26); font-size: 29px; top: -7px; left: 2.5px; transform-origin: 0px 50%; transform: scaleX(0.866);">ΑαΒ</span></div>
<span class="t wt" style="color: rgb(68, 68, 68); font-size: 10.4px; top: 83.62px; left: 813px; transform-origin: 0px 50%; transform: scaleX(0.909);">Τίτλος</span>
<span class="t wt" style="color: rgb(119, 119, 119); letter-spacing: 1px; font-size: 11.4px; top: 64.01px; left: 860px; transform-origin: 0px 50%; transform: scaleX(0.85);">ΑαΒβΓγΔ</span>
<span class="t wt" style="color: rgb(68, 68, 68); font-size: 10.4px; top: 83.62px; left: 861.3px; transform-origin: 0px 50%; transform: scaleX(0.961);">Υπότιτλος</span>
<div style="background: rgb(243, 243, 243); border-left: 1px solid rgb(213, 213, 213); position: absolute; left: 913px; top: 52.4px; width: 10.4px; height: 45px;"></div>
<div style="background: rgb(213, 213, 213); position: absolute; left: 913px; top: 67px; width: 10.4px; height: 1px;"></div>
<div style="background: rgb(213, 213, 213); position: absolute; left: 913px; top: 83px; width: 10.4px; height: 1px;"></div>
<svg viewBox="0 0 4.6 2.6" style="position: absolute; left: 916px; top: 58px; width: 4.6px; height: 2.6px;"><path d="M0 2.6L2.3 0L4.6 2.6Z" fill="#b5b5b5"></path></svg>
<svg viewBox="0 0 4.6 2.6" style="position: absolute; left: 916px; top: 74.3px; width: 4.6px; height: 2.6px;"><path d="M0 0H4.6L2.3 2.6Z" fill="#666"></path></svg>
<svg viewBox="0 0 5.0 5.6" style="position: absolute; left: 915.8px; top: 88px; width: 5px; height: 5.6px;"><rect x="0" y="0" width="5" height="1" fill="#666"></rect><path d="M0 2.6H5L2.5 5.4Z" fill="#666"></path></svg>
<span class="t wt" style="color: rgb(102, 102, 102); font-size: 10.4px; top: 109.01px; left: 730px; transform-origin: 0px 50%; transform: scaleX(0.884);">Στυλ</span>
<svg viewBox="0 0 5.0 5" style="position: absolute; left: 921.6px; top: 114px; width: 5px; height: 5px;"><path d="M0.5 3.5V0.5H3.5" fill="none" stroke="#777" stroke-width="0.9"></path><path d="M2 2L4.6 4.6M4.8 2.6V4.8H2.6" fill="none" stroke="#777" stroke-width="0.9"></path></svg>
<div style="background: rgb(222, 222, 222); position: absolute; left: 930px; top: 51px; width: 1px; height: 65px;"></div>
<svg viewBox="0 0 10.5 11" style="position: absolute; left: 937.5px; top: 52px; width: 10.5px; height: 11px;"><circle cx="6.4" cy="4" r="3.2" fill="none" stroke="#3c6db8" stroke-width="1.3"></circle><path d="M4.2 6.4L0.6 10.2" stroke="#3c6db8" stroke-width="1.5"></path></svg>
<span class="t wt" style="color: rgb(51, 51, 51); font-size: 10.6px; top: 51.81px; left: 951.7px; transform-origin: 0px 50%; transform: scaleX(0.854);">Εύρεση</span>
<svg viewBox="0 0 5.0 2.8" style="position: absolute; left: 990.1px; top: 56.6px; width: 5px; height: 2.8px;"><path d="M0 0H5L2.5 2.8Z" fill="#555"></path></svg>
<svg viewBox="0 0 12.3 13.0" style="position: absolute; left: 936.7px; top: 69.6px; width: 12.3px; height: 13px;"><text x="0" y="5.6" font-size="6.4" fill="#444" font-family="Liberation Sans,sans-serif">ab</text><text x="4.6" y="12.4" font-size="6.4" fill="#3c6db8" font-family="Liberation Sans,sans-serif">ac</text><path d="M0.6 9.4H3.4M2.2 8L3.6 9.4L2.2 10.8" stroke="#3c6db8" stroke-width="0.8" fill="none"></path></svg>
<span class="t wt" style="color: rgb(51, 51, 51); font-size: 10.6px; top: 70.6px; left: 951.7px; transform-origin: 0px 50%; transform: scaleX(0.957);">Αντικατάσταση</span>
<svg viewBox="0 0 8.0 12.6" style="position: absolute; left: 939.6px; top: 89px; width: 8px; height: 12.6px;"><path d="M1 0.8V9.6L3.2 7.6L5 11.8L6.4 11.2L4.6 7.2H7.4Z" fill="#fff" stroke="#555" stroke-width="0.9"></path></svg>
<span class="t wt" style="color: rgb(51, 51, 51); font-size: 10.6px; top: 89.41px; left: 951.7px; transform-origin: 0px 50%; transform: scaleX(0.886);">Επιλογή</span>
<svg viewBox="0 0 4.4 2.4" style="position: absolute; left: 988.6px; top: 94px; width: 4.4px; height: 2.4px;"><path d="M0 0H4.4L2.2 2.4Z" fill="#555"></path></svg>
<span class="t wt" style="color: rgb(102, 102, 102); font-size: 10.4px; top: 109.01px; left: 952.5px; transform-origin: 0px 50%; transform: scaleX(0.864);">Επεξεργασία</span>
<div style="background: rgb(222, 222, 222); position: absolute; left: 1027.5px; top: 51px; width: 1px; height: 65px;"></div>
<svg viewBox="0 0 7.6 4.4" style="position: absolute; left: 1066px; top: 110.6px; width: 7.6px; height: 4.4px;"><path d="M0.5 4L3.8 0.7L7.1 4" fill="none" stroke="#555" stroke-width="1.2"></path></svg>
<!--/RIBBON-ITEMS-->
<!--QAT-ITEMS-->
<!--DOC-->
<svg viewBox="0 0 11.8 11.6" style="position: absolute; left: 5px; top: 128.6px; width: 11.8px; height: 11.6px;"><rect x="0.5" y="0.5" width="10.8" height="10.6" rx="0.7" fill="#7244a6"></rect><rect x="2.2" y="1.7" width="7.4" height="4.1" fill="#fff"></rect><rect x="2.8" y="7.7" width="6.2" height="3.4" fill="#fff"></rect><rect x="4.2" y="9" width="1.5" height="2.1" fill="#7244a6"></rect></svg>
<svg viewBox="0 0 13 10.0" style="position: absolute; left: 45px; top: 129.6px; width: 13px; height: 10px;"><path d="M4.6 1L1 4.4L4.6 7.6M1 4.4H8.2A3.4 3.4 0 0 1 8.2 10H6" fill="none" stroke="#a6a6a6" stroke-width="1.5"></path></svg>
<svg viewBox="0 0 4.0 2.2" style="position: absolute; left: 63.6px; top: 134.1px; width: 4px; height: 2.2px;"><path d="M0 0H4L2.0 2.2Z" fill="#b0b0b0"></path></svg>
<svg viewBox="0 0 11.4 11.2" style="position: absolute; left: 88px; top: 129px; width: 11.4px; height: 11.2px;"><path d="M9.4 3.2A4.4 4.4 0 1 0 10.2 6.6" fill="none" stroke="#b3b3b3" stroke-width="1.3"></path><path d="M10.6 0.6V4H7.2" fill="none" stroke="#b3b3b3" stroke-width="1.3"></path></svg>
<svg viewBox="0 0 12.4 13.0" style="position: absolute; left: 131px; top: 128.2px; width: 12.4px; height: 13px;"><path d="M0.6 0.6H7L9.4 3V12.4H0.6Z" fill="#fff" stroke="#666" stroke-width="1"></path><circle cx="6.4" cy="7" r="2.8" fill="#fff" stroke="#444" stroke-width="1.1"></circle><path d="M8.4 9.2L11.6 12.6" stroke="#444" stroke-width="1.4"></path></svg>
<svg viewBox="0 0 14.3 11.0" style="position: absolute; left: 171.7px; top: 129.2px; width: 14.3px; height: 11px;"><path d="M0.6 10.4V1.2H4.6L5.8 2.6H11V4.4" fill="#f3c57a" stroke="#e0a040" stroke-width="1"></path><path d="M0.6 10.4L3 4.4H13.8L11.2 10.4Z" fill="#f7d28e" stroke="#e0a040" stroke-width="1"></path></svg>
<svg viewBox="0 0 11.8 11.6" style="position: absolute; left: 214.5px; top: 128.6px; width: 11.8px; height: 11.6px;"><rect x="0.5" y="0.5" width="10.8" height="10.6" rx="0.7" fill="#7244a6"></rect><rect x="2.2" y="1.7" width="7.4" height="4.1" fill="#fff"></rect><rect x="2.8" y="7.7" width="6.2" height="3.4" fill="#fff"></rect><rect x="4.2" y="9" width="1.5" height="2.1" fill="#7244a6"></rect></svg>
<svg viewBox="0 0 8 8.0" style="position: absolute; left: 222px; top: 133.6px; width: 8px; height: 8px;"><path d="M1 7L1.6 4.6L5.8 0.6L7.4 2.2L3.2 6.4Z" fill="#3c6db8"></path></svg>
<svg viewBox="0 0 12 11.4" style="position: absolute; left: 255px; top: 129px; width: 12px; height: 11.4px;"><text x="0" y="3.2" font-size="3.6" fill="#3c6db8" font-family="Liberation Sans,sans-serif">1</text><text x="0" y="7.4" font-size="3.6" fill="#3c6db8" font-family="Liberation Sans,sans-serif">2</text><text x="0" y="11.4" font-size="3.6" fill="#3c6db8" font-family="Liberation Sans,sans-serif">3</text><rect x="4" y="1.4" width="8" height="1" fill="#666"></rect><rect x="4" y="5.4" width="8" height="1" fill="#666"></rect><rect x="4" y="9.4" width="8" height="1" fill="#666"></rect></svg>
<svg viewBox="0 0 4.6 2.5" style="position: absolute; left: 273.3px; top: 133.35px; width: 4.6px; height: 2.5px;"><path d="M0 0H4.6L2.3 2.5Z" fill="#666"></path></svg>
<div style="background: rgb(255, 255, 255); border: 1px solid rgb(210, 210, 210); position: absolute; left: 285.7px; top: 126.4px; width: 67.7px; height: 17px;"></div>
<span class="t wt" style="color: rgb(51, 51, 51); font-size: 10.8px; top: 129.41px; left: 288px; transform-origin: 0px 50%; transform: scaleX(0.874);">Arial Black</span>
<svg viewBox="0 0 4.6 2.5" style="position: absolute; left: 345.7px; top: 133.35px; width: 4.6px; height: 2.5px;"><path d="M0 0H4.6L2.3 2.5Z" fill="#666"></path></svg>
<svg viewBox="0 0 15.3 13.0" style="position: absolute; left: 369.3px; top: 128.2px; width: 15.3px; height: 13px;"><rect x="0.6" y="4.6" width="11.8" height="6" rx="0.8" fill="#6e6e6e"></rect><rect x="2.8" y="1" width="7.4" height="3.6" fill="#fff" stroke="#666" stroke-width="0.9"></rect><rect x="2.8" y="8.4" width="7.4" height="4" fill="#fff" stroke="#666" stroke-width="0.9"></rect><circle cx="11.4" cy="4" r="3.6" fill="#3aa860"></circle><path d="M9.6 4L11 5.4L13.2 2.8" fill="none" stroke="#fff" stroke-width="1"></path></svg>
<svg viewBox="0 0 10.5 12.6" style="position: absolute; left: 414.3px; top: 128.4px; width: 10.5px; height: 12.6px;"><path d="M0.6 0.6H6.6L9.8 3.8V12H0.6Z" fill="#fff" stroke="#555" stroke-width="1"></path><path d="M6.6 0.6V3.8H9.8" fill="none" stroke="#555" stroke-width="1"></path></svg>
<svg viewBox="0 0 12.6 11.2" style="position: absolute; left: 455.6px; top: 129px; width: 12.6px; height: 11.2px;"><path d="M3.6 0.8H12V8H7L4.2 10.6V8H3.6Z" fill="#f4f4f4" stroke="#c0c0c0" stroke-width="1"></path><path d="M0.4 2.8L2.6 4.6L0.4 6.4" fill="none" stroke="#c0c0c0" stroke-width="1"></path></svg>
<svg viewBox="0 0 14 13.0" style="position: absolute; left: 498px; top: 128.2px; width: 14px; height: 13px;"><path d="M0.6 0.6H6.6L9.2 3.2V12.4H0.6Z" fill="#fff" stroke="#555" stroke-width="1"></path><rect x="4.6" y="7" width="9" height="4.2" rx="0.6" fill="#6e6e6e"></rect><rect x="6.2" y="5" width="5.8" height="2.2" fill="#fff" stroke="#666" stroke-width="0.8"></rect><rect x="6.2" y="10" width="5.8" height="2.6" fill="#fff" stroke="#666" stroke-width="0.8"></rect></svg>
<svg viewBox="0 0 14 13.2" style="position: absolute; left: 540px; top: 128.2px; width: 14px; height: 13.2px;"><rect x="0.6" y="2" width="9.4" height="10.6" rx="0.8" fill="#e6b55c"></rect><rect x="3" y="0.4" width="4.6" height="3" rx="0.8" fill="#7a7a7a"></rect><path d="M5.6 5.6H13.2V12.8H5.6Z" fill="#fff" stroke="#666" stroke-width="0.9"></path><rect x="7.4" y="7.6" width="4" height="3.4" fill="#6e8fc2"></rect></svg>
<svg viewBox="0 0 14 13.0" style="position: absolute; left: 582px; top: 128.2px; width: 14px; height: 13px;"><path d="M1.6 0.4V3.6H12.4V0.4M1.6 12.8V9.4H12.4V12.8" fill="#fff" stroke="#555" stroke-width="1"></path><path d="M0 6.6H14" stroke="#3c6db8" stroke-width="1.2"></path></svg>
<svg viewBox="0 0 4.6 2.5" style="position: absolute; left: 600.3px; top: 133.35px; width: 4.6px; height: 2.5px;"><path d="M0 0H4.6L2.3 2.5Z" fill="#666"></path></svg>
<svg viewBox="0 0 14.0 11.8" style="position: absolute; left: 624.4px; top: 129px; width: 14px; height: 11.8px;"><rect x="0.6" y="0.6" width="10.4" height="8.4" fill="#fff" stroke="#777" stroke-width="1"></rect><path d="M1.6 7.6L4.4 4.4L6.6 6.4L8.2 5L10 7.6Z" fill="#7aa6d8"></path><rect x="7" y="6.6" width="6.6" height="4.2" fill="#fff" stroke="#3c6db8" stroke-width="1"></rect><path d="M8.6 11.6H12" stroke="#3c6db8" stroke-width="1"></path></svg>
<svg viewBox="0 0 14.4 10.4" style="position: absolute; left: 666.4px; top: 129.6px; width: 14.4px; height: 10.4px;"><rect x="0.6" y="0.6" width="13.2" height="9.2" fill="#fff" stroke="#777" stroke-width="1"></rect><text x="2" y="6.6" font-size="5.6" fill="#555" font-family="Liberation Sans,sans-serif">A</text><path d="M6.6 3.4H12M6.6 5.4H12M2.4 7.6H12" stroke="#999" stroke-width="0.8"></path></svg>
<svg viewBox="0 0 13.3 12.2" style="position: absolute; left: 709.5px; top: 128.2px; width: 13.3px; height: 12.2px;"><path d="M2.6 2.6H12.6V9.2H7.4L4.8 11.8V9.2H2.6Z" fill="#fff" stroke="#777" stroke-width="1"></path><path d="M2.4 0V4.8M0 2.4H4.8" stroke="#3aa860" stroke-width="1.4"></path></svg>
<svg viewBox="0 0 13.3 10.4" style="position: absolute; left: 751.9px; top: 129.6px; width: 13.3px; height: 10.4px;"><rect x="0.6" y="0.6" width="5.2" height="9.2" fill="#fff" stroke="#777" stroke-width="1"></rect><rect x="7.6" y="0.6" width="5.2" height="9.2" fill="#fff" stroke="#777" stroke-width="1"></rect><path d="M2 3H4.6M2 5H4.6M2 7H4.6M9 3H11.6M9 5H11.6M9 7H11.6" stroke="#aaa" stroke-width="0.7"></path></svg>
<svg viewBox="0 0 14 13.2" style="position: absolute; left: 795px; top: 128.2px; width: 14px; height: 13.2px;"><rect x="0.6" y="2" width="9.4" height="10.6" rx="0.8" fill="#e6b55c"></rect><rect x="3" y="0.4" width="4.6" height="3" rx="0.8" fill="#7a7a7a"></rect><path d="M5.6 5.6H13.2V12.8H5.6Z" fill="#fff" stroke="#666" stroke-width="0.9"></path></svg>
<svg viewBox="0 0 4.6 2.5" style="position: absolute; left: 812.2px; top: 133.35px; width: 4.6px; height: 2.5px;"><path d="M0 0H4.6L2.3 2.5Z" fill="#666"></path></svg>
<svg viewBox="0 0 14.0 13.2" style="position: absolute; left: 837.3px; top: 128.2px; width: 14px; height: 13.2px;"><rect x="0.6" y="2" width="9.4" height="10.6" rx="0.8" fill="#e6b55c"></rect><rect x="3" y="0.4" width="4.6" height="3" rx="0.8" fill="#7a7a7a"></rect><path d="M5.6 5.6H13.2V12.8H5.6Z" fill="#fff" stroke="#666" stroke-width="0.9"></path></svg>
<svg viewBox="0 0 14.0 13.2" style="position: absolute; left: 877.5px; top: 128.2px; width: 14px; height: 13.2px;"><rect x="0.6" y="2" width="9.4" height="10.6" rx="0.8" fill="#e6b55c"></rect><rect x="3" y="0.4" width="4.6" height="3" rx="0.8" fill="#7a7a7a"></rect><path d="M5.6 5.6H13.2V12.8H5.6Z" fill="#fff" stroke="#666" stroke-width="0.9"></path></svg>
<svg viewBox="0 0 4.6 2.5" style="position: absolute; left: 895.7px; top: 133.35px; width: 4.6px; height: 2.5px;"><path d="M0 0H4.6L2.3 2.5Z" fill="#666"></path></svg>
<svg viewBox="0 0 13.5 10.4" style="position: absolute; left: 919.5px; top: 129.6px; width: 13.5px; height: 10.4px;"><rect x="0.6" y="0.6" width="12.2" height="9.2" fill="#fff" stroke="#777" stroke-width="1"></rect><text x="1.8" y="6.6" font-size="5.6" fill="#555" font-family="Liberation Sans,sans-serif">A</text><path d="M6.4 3.4H11M6.4 5.4H11M2.2 7.6H11" stroke="#999" stroke-width="0.8"></path></svg>
<svg viewBox="0 0 4.6 2.5" style="position: absolute; left: 937px; top: 133.35px; width: 4.6px; height: 2.5px;"><path d="M0 0H4.6L2.3 2.5Z" fill="#666"></path></svg>
<svg viewBox="0 0 13.4 12.0" style="position: absolute; left: 961.8px; top: 128.6px; width: 13.4px; height: 12px;"><rect x="0.6" y="3.6" width="12.2" height="8" fill="#fff" stroke="#666" stroke-width="1"></rect><path d="M4.6 7V2.4A2 2 0 0 1 8.6 2.4V7.4A1 1 0 0 1 6.6 7.4V3.4" fill="none" stroke="#555" stroke-width="0.9"></path></svg>
<svg viewBox="0 0 13.0 13.6" style="position: absolute; left: 1004.2px; top: 127.6px; width: 13px; height: 13.6px;"><text x="1.2" y="5" font-size="5.2" font-weight="bold" fill="#555" font-family="Liberation Sans,sans-serif">ABC</text><path d="M2.6 9L5.6 12.2L11.4 6.4" fill="none" stroke="#3c6db8" stroke-width="1.8"></path></svg>
<svg viewBox="0 0 6 4.0" style="position: absolute; left: 1048px; top: 132.6px; width: 6px; height: 4px;"><path d="M0.4 0.4L2.2 2L0.4 3.6M3.4 0.4L5.2 2L3.4 3.6" fill="none" stroke="#666" stroke-width="0.9"></path></svg>
<div style="background: rgb(230, 230, 230); position: absolute; left: 0px; top: 147.4px; width: 1080px; height: 417.2px;"></div>
<div style="background: rgb(253, 253, 253); border-top: 1px solid rgb(207, 207, 207); border-right: 1px solid rgb(207, 207, 207); border-bottom: 1px solid rgb(207, 207, 207); border-image: initial; border-left: none; position: absolute; left: 0px; top: 150px; width: 7.4px; height: 14px;"></div>
<div style="background: rgb(85, 85, 85); position: absolute; left: 1.2px; top: 159.6px; width: 3.4px; height: 1.4px;"></div>
<div style="background: rgb(198, 198, 198); position: absolute; left: 222.3px; top: 153.1px; width: 631.9px; height: 7.6px;"></div>
<div style="background: rgb(254, 254, 254); position: absolute; left: 318px; top: 153.1px; width: 441.3px; height: 7.6px;"></div>
<svg viewBox="0 0 631.9 9.6" style="position: absolute; left: 222.3px; top: 152.2px; width: 631.9px; height: 9.6px;"><rect x="12.29" y="4.4" width="1" height="1" fill="#666"></rect><rect x="19.92" y="3.2" width="0.9" height="3.6" fill="#666"></rect><rect x="27.36" y="4.4" width="1" height="1" fill="#666"></rect><rect x="42.44" y="4.4" width="1" height="1" fill="#666"></rect><rect x="50.07" y="3.2" width="0.9" height="3.6" fill="#666"></rect><rect x="57.51" y="4.4" width="1" height="1" fill="#666"></rect><rect x="72.59" y="4.4" width="1" height="1" fill="#666"></rect><rect x="80.22" y="3.2" width="0.9" height="3.6" fill="#666"></rect><rect x="87.66" y="4.4" width="1" height="1" fill="#666"></rect><rect x="102.74" y="4.4" width="1" height="1" fill="#666"></rect><rect x="110.37" y="3.2" width="0.9" height="3.6" fill="#666"></rect><rect x="117.81" y="4.4" width="1" height="1" fill="#666"></rect><rect x="132.89" y="4.4" width="1" height="1" fill="#666"></rect><rect x="140.53" y="3.2" width="0.9" height="3.6" fill="#666"></rect><rect x="147.96" y="4.4" width="1" height="1" fill="#666"></rect><rect x="163.04" y="4.4" width="1" height="1" fill="#666"></rect><rect x="170.67" y="3.2" width="0.9" height="3.6" fill="#666"></rect><rect x="178.11" y="4.4" width="1" height="1" fill="#666"></rect><rect x="193.19" y="4.4" width="1" height="1" fill="#666"></rect><rect x="200.82" y="3.2" width="0.9" height="3.6" fill="#666"></rect><rect x="208.26" y="4.4" width="1" height="1" fill="#666"></rect><rect x="223.34" y="4.4" width="1" height="1" fill="#666"></rect><rect x="230.97" y="3.2" width="0.9" height="3.6" fill="#666"></rect><rect x="238.41" y="4.4" width="1" height="1" fill="#666"></rect><rect x="253.49" y="4.4" width="1" height="1" fill="#666"></rect><rect x="261.12" y="3.2" width="0.9" height="3.6" fill="#666"></rect><rect x="268.56" y="4.4" width="1" height="1" fill="#666"></rect><rect x="283.64" y="4.4" width="1" height="1" fill="#666"></rect><rect x="291.28" y="3.2" width="0.9" height="3.6" fill="#666"></rect><rect x="298.71" y="4.4" width="1" height="1" fill="#666"></rect><rect x="313.79" y="4.4" width="1" height="1" fill="#666"></rect><rect x="321.43" y="3.2" width="0.9" height="3.6" fill="#666"></rect><rect x="328.86" y="4.4" width="1" height="1" fill="#666"></rect><rect x="343.94" y="4.4" width="1" height="1" fill="#666"></rect><rect x="351.57" y="3.2" width="0.9" height="3.6" fill="#666"></rect><rect x="359.01" y="4.4" width="1" height="1" fill="#666"></rect><rect x="374.09" y="4.4" width="1" height="1" fill="#666"></rect><rect x="381.72" y="3.2" width="0.9" height="3.6" fill="#666"></rect><rect x="389.16" y="4.4" width="1" height="1" fill="#666"></rect><rect x="404.24" y="4.4" width="1" height="1" fill="#666"></rect><rect x="411.88" y="3.2" width="0.9" height="3.6" fill="#666"></rect><rect x="419.31" y="4.4" width="1" height="1" fill="#666"></rect><rect x="434.39" y="4.4" width="1" height="1" fill="#666"></rect><rect x="442.02" y="3.2" width="0.9" height="3.6" fill="#666"></rect><rect x="449.46" y="4.4" width="1" height="1" fill="#666"></rect><rect x="464.54" y="4.4" width="1" height="1" fill="#666"></rect><rect x="472.18" y="3.2" width="0.9" height="3.6" fill="#666"></rect><rect x="479.61" y="4.4" width="1" height="1" fill="#666"></rect><rect x="494.69" y="4.4" width="1" height="1" fill="#666"></rect><rect x="502.32" y="3.2" width="0.9" height="3.6" fill="#666"></rect><rect x="509.76" y="4.4" width="1" height="1" fill="#666"></rect><rect x="524.84" y="4.4" width="1" height="1" fill="#666"></rect><rect x="532.48" y="3.2" width="0.9" height="3.6" fill="#666"></rect><rect x="539.91" y="4.4" width="1" height="1" fill="#666"></rect><rect x="554.99" y="4.4" width="1" height="1" fill="#666"></rect><rect x="562.63" y="3.2" width="0.9" height="3.6" fill="#666"></rect><rect x="570.06" y="4.4" width="1" height="1" fill="#666"></rect><rect x="585.14" y="4.4" width="1" height="1" fill="#666"></rect><rect x="592.77" y="3.2" width="0.9" height="3.6" fill="#666"></rect><rect x="600.21" y="4.4" width="1" height="1" fill="#666"></rect><rect x="615.29" y="4.4" width="1" height="1" fill="#666"></rect><rect x="622.93" y="3.2" width="0.9" height="3.6" fill="#666"></rect></svg>
<span class="t wt" style="color: rgb(68, 68, 68); font-size: 8.2px; top: 154.1px; left: 345.82px;">1</span>
<span class="t wt" style="color: rgb(68, 68, 68); font-size: 8.2px; top: 154.1px; left: 376.02px;">2</span>
<span class="t wt" style="color: rgb(68, 68, 68); font-size: 8.2px; top: 154.1px; left: 406.12px;">3</span>
<span class="t wt" style="color: rgb(68, 68, 68); font-size: 8.2px; top: 154.1px; left: 436.32px;">4</span>
<span class="t wt" style="color: rgb(68, 68, 68); font-size: 8.2px; top: 154.1px; left: 466.52px;">5</span>
<span class="t wt" style="color: rgb(68, 68, 68); font-size: 8.2px; top: 154.1px; left: 496.62px;">6</span>
<span class="t wt" style="color: rgb(68, 68, 68); font-size: 8.2px; top: 154.1px; left: 526.72px;">7</span>
<span class="t wt" style="color: rgb(68, 68, 68); font-size: 8.2px; top: 154.1px; left: 556.92px;">8</span>
<span class="t wt" style="color: rgb(68, 68, 68); font-size: 8.2px; top: 154.1px; left: 587.02px;">9</span>
<span class="t wt" style="color: rgb(68, 68, 68); font-size: 8.2px; top: 154.1px; left: 614.95px;">10</span>
<span class="t wt" style="color: rgb(68, 68, 68); font-size: 8.2px; top: 154.1px; left: 645.35px;">11</span>
<span class="t wt" style="color: rgb(68, 68, 68); font-size: 8.2px; top: 154.1px; left: 675.25px;">12</span>
<span class="t wt" style="color: rgb(68, 68, 68); font-size: 8.2px; top: 154.1px; left: 705.45px;">13</span>
<span class="t wt" style="color: rgb(68, 68, 68); font-size: 8.2px; top: 154.1px; left: 735.55px;">14</span>
<span class="t wt" style="color: rgb(68, 68, 68); font-size: 8.2px; top: 154.1px; left: 765.65px;">15</span>
<span class="t wt" style="color: rgb(68, 68, 68); font-size: 8.2px; top: 154.1px; left: 795.85px;">16</span>
<span class="t wt" style="color: rgb(68, 68, 68); font-size: 8.2px; top: 154.1px; left: 825.95px;">17</span>
<span class="t wt" style="color: rgb(68, 68, 68); font-size: 8.2px; top: 154.1px; left: 285.62px;">1</span>
<span class="t wt" style="color: rgb(68, 68, 68); font-size: 8.2px; top: 154.1px; left: 255.42px;">2</span>
<span class="t wt" style="color: rgb(68, 68, 68); font-size: 8.2px; top: 154.1px; left: 225.32px;">3</span>
<svg viewBox="0 0 9.0 17.4" style="position: absolute; left: 313.6px; top: 150.6px; width: 9px; height: 17.4px;"><path d="M0.6 0.6H8.4V2.6L4.5 6.4L0.6 2.6Z" fill="#fff" stroke="#777" stroke-width="0.8"></path><path d="M0.6 11.4L4.5 7.6L8.4 11.4V13H0.6Z" fill="#fff" stroke="#777" stroke-width="0.8"></path><rect x="0.6" y="13.4" width="7.8" height="3.4" fill="#fff" stroke="#777" stroke-width="0.8"></rect></svg>
<svg viewBox="0 0 9 6.0" style="position: absolute; left: 755px; top: 157.6px; width: 9px; height: 6px;"><path d="M0.6 4.4L4.5 0.6L8.4 4.4V5.6H0.6Z" fill="#fff" stroke="#777" stroke-width="0.8"></path></svg>
<div style="background: rgb(254, 254, 254); box-shadow: rgb(220, 220, 220) 0px 0px 0px 1px; position: absolute; left: 223.6px; top: 168px; width: 631.4px; height: 393px;"></div>
<span class="t dt" style="color: rgb(17, 17, 17); font-weight: bold; font-size: 12.6px; top: 167.7px; left: 492px; transform-origin: 0px 50%; transform: scaleX(0.987);">ΤΟΥ ΒΙΝΤΕΟ</span>
<span class="t dt" style="color: rgb(78, 123, 47); font-weight: bold; font-size: 13px; top: 195.21px; left: 296.2px; transform-origin: 0px 50%; transform: scaleX(1.031);">Γ)&nbsp;&nbsp;Συνέχισε και ολοκλήρωσε τις παρακάτω φράσεις , ώστε να βοηθήσεις</span>
<span class="t dt" style="color: rgb(78, 123, 47); font-weight: bold; font-size: 13px; top: 214.01px; left: 296.2px; transform-origin: 0px 50%; transform: scaleX(1.013);">τους μαθητές σου να γνωρίσουν ακόμα καλύτερα τα ευρωπαϊκά παιχνίδια.</span>
<span class="t dt" style="color: rgb(78, 123, 47); font-weight: bold; font-size: 13px; top: 242.01px; left: 296.2px; transform-origin: 0px 50%; transform: scaleX(1.036);">(συμβουλέψου τον παγκόσμιο χάρτη/άτλαντα όπου χρειάζεται)</span>
<span class="t dt" style="color: rgb(78, 123, 47); font-weight: bold; font-size: 13px; top: 298.01px; left: 296.2px; transform-origin: 0px 50%; transform: scaleX(1.005);">= Τα ευρωπαϊκά παιχνίδια μπορεί να προέρχονται από χώρες, όπως:</span>
<svg viewBox="0 0 445.1 2.0" style="position: absolute; left: 296.2px; top: 327.9px; width: 445.1px; height: 2px;"><rect x="0" y="0.15" width="445.1" height="1.7" fill="#43702a"></rect></svg>
<span class="t dt" style="color: rgb(78, 123, 47); font-weight: bold; font-size: 13px; top: 345.21px; left: 296.2px; transform-origin: 0px 50%; transform: scaleX(1.039);">= Τα ελληνικά είναι ευρωπαϊκά παιχνίδια, γιατί</span>
<svg viewBox="0 0 147.7 2.0" style="position: absolute; left: 597px; top: 356.8px; width: 147.7px; height: 2px;"><rect x="0" y="0.15" width="147.7" height="1.7" fill="#43702a"></rect></svg>
<svg viewBox="0 0 445.1 2.0" style="position: absolute; left: 296.2px; top: 384px; width: 445.1px; height: 2px;"><rect x="0" y="0.15" width="445.1" height="1.7" fill="#43702a"></rect></svg>
<span class="t dt" style="color: rgb(78, 123, 47); font-weight: bold; font-size: 13px; top: 400.71px; left: 296.2px; transform-origin: 0px 50%; transform: scaleX(1.025);">= Είναι ωραίο και ωφέλιμο να γνωρίζουμε και να παίζουμε παιχνίδια από</span>
<span class="t dt" style="color: rgb(78, 123, 47); font-weight: bold; font-size: 13px; top: 419.81px; left: 296.2px; transform-origin: 0px 50%; transform: scaleX(1.011);">άλλες χώρες, διότι</span>
<svg viewBox="0 0 318.8 2.0" style="position: absolute; left: 415px; top: 431.4px; width: 318.8px; height: 2px;"><rect x="0" y="0.15" width="318.8" height="1.7" fill="#43702a"></rect></svg>
<svg viewBox="0 0 452.3 2.0" style="position: absolute; left: 296.2px; top: 458.8px; width: 452.3px; height: 2px;"><rect x="0" y="0.15" width="452.3" height="1.7" fill="#43702a"></rect></svg>
<div style="background: rgb(251, 251, 251); border-radius: 16.3px; box-shadow: rgb(216, 216, 216) 0px 0px 0px 0.8px; position: absolute; left: 6.75px; top: 272px; width: 32.65px; height: 144px;"></div>
<svg viewBox="0 0 12.4 12" style="position: absolute; left: 17px; top: 287px; width: 12.4px; height: 12px;"><path d="M1 9C3 5 5.4 1.4 6 2.6C6.8 4.2 3.4 10 4.8 10C6.4 10 8.2 4.2 9.6 4.6C10.6 5 8.6 9.6 9.6 9.8C10.4 9.9 11.2 9 11.8 8.4" fill="none" stroke="#555" stroke-width="1.2"></path></svg>
<svg viewBox="0 0 10.4 12.8" style="position: absolute; left: 18px; top: 320.6px; width: 10.4px; height: 12.8px;"><rect x="3.4" y="5.4" width="3.8" height="6.6" rx="1.9" fill="none" stroke="#c9c9c9" stroke-width="1"></rect><path d="M1.4 4.4A5.6 5.6 0 0 1 9.2 4.4M0 2.4A7.6 7.6 0 0 1 10.4 2.4" fill="none" stroke="#c9c9c9" stroke-width="0.9"></path></svg>
<svg viewBox="0 0 12.2 12.4" style="position: absolute; left: 17.6px; top: 355.5px; width: 12.2px; height: 12.4px;"><circle cx="4.6" cy="4.6" r="4" fill="none" stroke="#555" stroke-width="1.1"></circle><path d="M7.6 7.6L11.6 11.8" stroke="#555" stroke-width="1.2"></path><path d="M2.6 4.6H6.6M4.6 2.6V6.6" stroke="#555" stroke-width="1"></path></svg>
<svg viewBox="0 0 12.2 12.4" style="position: absolute; left: 17.6px; top: 391px; width: 12.2px; height: 12.4px;"><circle cx="4.6" cy="4.6" r="4" fill="none" stroke="#555" stroke-width="1.1"></circle><path d="M7.6 7.6L11.6 11.8" stroke="#555" stroke-width="1.2"></path><path d="M2.6 4.6H6.6" stroke="#555" stroke-width="1"></path></svg>
<div style="background: rgb(220, 220, 220); position: absolute; left: 1069.2px; top: 147.4px; width: 11.2px; height: 417.2px;"></div>
<div style="background: rgb(253, 253, 253); border: 1px solid rgb(207, 207, 207); position: absolute; left: 1069px; top: 150.6px; width: 10.6px; height: 10.8px;"></div>
<svg viewBox="0 0 5.4 3.0" style="position: absolute; left: 1071.6px; top: 154.4px; width: 5.4px; height: 3px;"><path d="M0 3L2.7 0L5.4 3Z" fill="#666"></path></svg>
<div style="background: rgb(238, 238, 238); border: 1px solid rgb(184, 184, 184); position: absolute; left: 1069.3px; top: 328px; width: 11.1px; height: 27.8px;"></div>
<div style="background: rgb(253, 253, 253); border: 1px solid rgb(207, 207, 207); position: absolute; left: 1069px; top: 550.6px; width: 10.6px; height: 11px;"></div>
<svg viewBox="0 0 5.4 3.0" style="position: absolute; left: 1071.6px; top: 554.8px; width: 5.4px; height: 3px;"><path d="M0 0L2.7 3L5.4 0Z" fill="#666"></path></svg>
<!--/DOC-->
<!--STATUS-->
<div style="background: rgb(241, 241, 241); border-top: 1px solid rgb(220, 220, 220); position: absolute; left: 0px; top: 564.6px; width: 1080px; height: 17.6px;"></div>
<span class="t wt" style="color: rgb(68, 68, 68); font-size: 9.8px; top: 568.61px; left: -4.4px; transform-origin: 0px 50%; transform: scaleX(0.924);">Σελίδα 3 από 6</span>
<span class="t wt" style="color: rgb(68, 68, 68); font-size: 9.8px; top: 568.61px; left: 71.2px; transform-origin: 0px 50%; transform: scaleX(0.895);">429 λέξεις</span>
<svg viewBox="0 0 12.3 11" style="position: absolute; left: 126.7px; top: 568px; width: 12.3px; height: 11px;"><path d="M0.6 1.6Q3 0.2 5.4 1.6V9.8Q3 8.6 0.6 9.8Z" fill="#fff" stroke="#666" stroke-width="0.9"></path><path d="M5.4 1.6Q7.4 0.4 9 1" fill="none" stroke="#666" stroke-width="0.9"></path><path d="M8 3.6L11.6 7.4M11.6 3.6L8 7.4" stroke="#666" stroke-width="1"></path></svg>
<span class="t wt" style="color: rgb(68, 68, 68); font-size: 9.8px; top: 568.61px; left: 151.9px; transform-origin: 0px 50%; transform: scaleX(0.906);">Ελληνικά</span>
<svg viewBox="0 0 11.4 10.2" style="position: absolute; left: 858px; top: 568.4px; width: 11.4px; height: 10.2px;"><path d="M0.6 1.2Q3 0 5.6 1.2V9.6Q3 8.4 0.6 9.6ZM5.6 1.2Q8.2 0 10.8 1.2V9.6Q8.2 8.4 5.6 9.6" fill="#fff" stroke="#666" stroke-width="0.9"></path><path d="M2 3.4H4.4M2 5.2H4.4M7 3.4H9.4M7 5.2H9.4" stroke="#888" stroke-width="0.7"></path></svg>
<div style="background: rgb(201, 201, 201); position: absolute; left: 879.3px; top: 565.4px; width: 30px; height: 16.8px;"></div>
<svg viewBox="0 0 11.6 10.4" style="position: absolute; left: 888.7px; top: 568.6px; width: 11.6px; height: 10.4px;"><rect x="0.5" y="0.5" width="10.6" height="9.4" fill="#fff" stroke="#555" stroke-width="0.9"></rect><path d="M2.2 3H9.4M2.2 5H9.4M2.2 7H9.4" stroke="#666" stroke-width="0.8"></path></svg>
<svg viewBox="0 0 12.3 11.0" style="position: absolute; left: 918.7px; top: 568.4px; width: 12.3px; height: 11px;"><rect x="0.5" y="0.5" width="9.4" height="9" fill="#fff" stroke="#666" stroke-width="0.9"></rect><path d="M2 3H8M2 5H6" stroke="#888" stroke-width="0.8"></path><circle cx="9.2" cy="8.2" r="2.6" fill="#fff" stroke="#666" stroke-width="0.9"></circle></svg>
<div style="background: rgb(85, 85, 85); position: absolute; left: 943.6px; top: 573px; width: 4.4px; height: 1.4px;"></div>
<div style="background: rgb(154, 154, 154); position: absolute; left: 952.5px; top: 573.2px; width: 78.7px; height: 1px;"></div>
<div style="background: rgb(68, 68, 68); position: absolute; left: 990.2px; top: 568.6px; width: 2.8px; height: 10.4px;"></div>
<div style="background: rgb(85, 85, 85); position: absolute; left: 1034.6px; top: 573px; width: 6px; height: 1.4px;"></div>
<div style="background: rgb(85, 85, 85); position: absolute; left: 1037px; top: 570.6px; width: 1.4px; height: 6.2px;"></div>
<span class="t wt" style="color: rgb(68, 68, 68); font-size: 9.6px; top: 568.6px; left: 1053.7px; transform-origin: 0px 50%; transform: scaleX(0.839);">100%</span>
<div style="background: linear-gradient(90deg, rgb(33, 56, 63) 0px, rgb(30, 54, 64) 45%, rgb(28, 47, 71) 75%, rgb(27, 41, 75) 100%); position: absolute; left: 0px; top: 582.2px; width: 1081.8px; height: 32.2px;"></div>
<div style="background: rgb(111, 122, 146); position: absolute; left: 1078.2px; top: 582.2px; width: 0.7px; height: 32.2px;"></div>
<svg viewBox="0 0 14 14.0" style="position: absolute; left: 3px; top: 591.6px; width: 14px; height: 14px;"><path d="M0 2L6 1.1V6.6H0ZM6.9 1L14 0V6.6H6.9ZM0 7.4H6V12.9L0 12ZM6.9 7.4H14V14L6.9 13Z" fill="#fff"></path></svg>
<svg viewBox="0 0 15.0 13.8" style="position: absolute; left: 40.5px; top: 591.6px; width: 15px; height: 13.8px;"><rect x="2.6" y="3" width="8.4" height="7.4" fill="none" stroke="#fff" stroke-width="1.2"></rect><path d="M0.6 0.8H4M9.4 0.8H12.6M0.6 13H4M9.4 13H12.6M0.6 0.4V3M0.6 10.6V13.4M12.6 0.4V13.4M14.4 4V6.4" stroke="#fff" stroke-width="1.2" fill="none"></path></svg>
<svg viewBox="0 0 17.8 14.8" style="position: absolute; left: 80.6px; top: 590.6px; width: 17.8px; height: 14.8px;"><path d="M0.4 1.4H6L7.6 3H17.4V14.4H0.4Z" fill="#f4c54a"></path><path d="M0.4 5H17.4V14.4H0.4Z" fill="#f8d775"></path><rect x="5.4" y="9" width="7" height="5.4" fill="#3f8fd8"></rect><rect x="7.4" y="11.4" width="3" height="3" fill="#f8d775"></rect></svg>
<svg viewBox="0 0 20.8 20.0" style="position: absolute; left: 118px; top: 588.6px; width: 20.8px; height: 20px;"><circle cx="10.2" cy="10" r="9.4" fill="#1c7fd6"></circle><path d="M1 11.4A9.4 9.4 0 0 1 19.4 8.4C19.8 12 17 13 13.6 13H8.4A4.4 4.4 0 0 0 15.4 16.6A9.4 9.4 0 0 1 1 11.4Z" fill="#35c1d8"></path><path d="M4.6 12.4A5.6 5.6 0 0 1 10.6 6.4C13.6 6.4 15 8.4 15 9.8C15 11 14 11.4 13 11.4H8.2C8 9.6 9 8.6 10 8.4C7 8 4.8 10 4.6 12.4Z" fill="#0f4f9e"></path></svg>
<svg viewBox="0 0 18.4 18.4" style="position: absolute; left: 158px; top: 588.8px; width: 18.4px; height: 18.4px;"><circle cx="9.2" cy="9.2" r="7.6" fill="#0c1f2b" stroke="#dfe9ee" stroke-width="2.2"></circle><circle cx="9.2" cy="9.2" r="5.2" fill="#fff"></circle><path d="M4.6 11.6A5.2 5.2 0 0 0 11.4 13.8A5 5 0 0 1 4.6 11.6Z" fill="#6cc04a" stroke="#6cc04a" stroke-width="1.6"></path><path d="M4.2 8A5.2 5.2 0 0 1 11 4.4" fill="none" stroke="#12a4dc" stroke-width="2"></path></svg>
<svg viewBox="0 0 20.6 20.0" style="position: absolute; left: 197px; top: 588.6px; width: 20.6px; height: 20px;"><circle cx="9.6" cy="9.6" r="9.2" fill="#e34133"></circle><path d="M9.6 9.6L1.6 5A9.2 9.2 0 0 0 9.6 18.8L13.6 11.8Z" fill="#2da44e"></path><path d="M9.6 9.6L13.6 11.8L9.6 18.8A9.2 9.2 0 0 0 17.6 5H9.6Z" fill="#f8c51c"></path><circle cx="9.6" cy="9.6" r="4.2" fill="#4a8af4" stroke="#fff" stroke-width="1.2"></circle><circle cx="15.4" cy="15" r="5" fill="#5a9a3c"></circle><text x="13.2" y="17.4" font-size="6.4" fill="#fff" font-family="Liberation Sans,sans-serif">K</text></svg>
<svg viewBox="0 0 21.7 20.4" style="position: absolute; left: 235.5px; top: 588.6px; width: 21.7px; height: 20.4px;"><rect x="0" y="0" width="19.6" height="18.6" rx="1.6" fill="#7d62d8"></rect><path d="M9.8 3A6 6 0 0 0 5.6 13.2L5 16L8 14.8A6 6 0 1 0 9.8 3Z" fill="#fff"></path><path d="M8 6.4C7.4 8 9.4 11 11.6 11.4" stroke="#7d62d8" stroke-width="1.4" fill="none"></path><circle cx="16" cy="15" r="5.2" fill="#e8352c"></circle><text x="14.1" y="17.6" font-size="7.4" font-weight="bold" fill="#fff" font-family="Liberation Sans,sans-serif">5</text></svg>
<div style="background: rgba(255, 255, 255, 0.17); position: absolute; left: 265.5px; top: 582.2px; width: 38.2px; height: 32.2px;"></div>
<svg viewBox="0 0 17.8 17.4" style="position: absolute; left: 275.6px; top: 589.6px; width: 17.8px; height: 17.4px;"><rect x="6" y="0.6" width="11.4" height="16.2" fill="#fff"></rect><path d="M8.4 3.6H15.6M8.4 6H15.6M8.4 8.4H15.6M8.4 10.8H15.6M8.4 13.2H15.6" stroke="#2b579a" stroke-width="1"></path><rect x="0" y="3" width="10.4" height="11.4" fill="#2b579a"></rect><text x="1.6" y="11.8" font-size="8" font-weight="bold" fill="#fff" font-family="Liberation Sans,sans-serif">W</text></svg>
<div style="background: rgb(127, 184, 234); position: absolute; left: 73px; top: 612.6px; width: 32px; height: 1.8px;"></div>
<div style="background: rgb(127, 184, 234); position: absolute; left: 112.5px; top: 612.6px; width: 31.9px; height: 1.8px;"></div>
<div style="background: rgb(127, 184, 234); position: absolute; left: 151px; top: 612.6px; width: 32.7px; height: 1.8px;"></div>
<div style="background: rgb(127, 184, 234); position: absolute; left: 190.5px; top: 612.6px; width: 32.5px; height: 1.8px;"></div>
<div style="background: rgb(127, 184, 234); position: absolute; left: 229.5px; top: 612.6px; width: 32.2px; height: 1.8px;"></div>
<div style="background: rgb(127, 184, 234); position: absolute; left: 265.5px; top: 612.6px; width: 38.2px; height: 1.8px;"></div>
<svg viewBox="0 0 13.3 13.2" style="position: absolute; left: 751.9px; top: 591.6px; width: 13.3px; height: 13.2px;"><circle cx="6.6" cy="6.6" r="5.4" fill="#fff" stroke="#3fb0e0" stroke-width="2.2"></circle><path d="M3 8.6A4 4 0 0 0 8.6 10.4" stroke="#6cc04a" stroke-width="2" fill="none"></path></svg>
<svg viewBox="0 0 10.9 14.0" style="position: absolute; left: 772.5px; top: 591.2px; width: 10.9px; height: 14px;"><rect x="1.6" y="3.6" width="6" height="6.6" rx="1" fill="none" stroke="#fff" stroke-width="1"></rect><path d="M7.6 6L10.2 4.6V9.4L7.6 8M1.4 1.6Q5 -0.4 9 1.6M1.4 12.4Q5 14.4 9 12.4" fill="none" stroke="#fff" stroke-width="0.9"></path></svg>
<svg viewBox="0 0 14.6 9.2" style="position: absolute; left: 789.4px; top: 593.6px; width: 14.6px; height: 9.2px;"><path d="M3.4 9A3 3 0 0 1 3.4 3.2A4.4 4.4 0 0 1 11.4 3.6A2.8 2.8 0 0 1 11.6 9Z" fill="#f0f0f0"></path></svg>
<svg viewBox="0 0 13.4 13.2" style="position: absolute; left: 809.2px; top: 591.6px; width: 13.4px; height: 13.2px;"><rect x="0" y="0.6" width="12.4" height="12.4" rx="1.4" fill="#7d62d8"></rect><path d="M6.2 2.6A3.8 3.8 0 0 0 3.6 9.2L3.2 11L5.2 10.2A3.8 3.8 0 1 0 6.2 2.6Z" fill="#fff"></path><circle cx="10.4" cy="2.8" r="2.8" fill="#e8352c"></circle></svg>
<svg viewBox="0 0 13.3 10.8" style="position: absolute; left: 828.7px; top: 592.8px; width: 13.3px; height: 10.8px;"><path d="M1 8.6L5.6 4L8 6.6L12.4 2" stroke="#d8d8d8" stroke-width="1.4" fill="none"></path><circle cx="4.4" cy="7.4" r="2.4" fill="#e8453c"></circle><circle cx="9.6" cy="6" r="2.2" fill="#e8453c"></circle></svg>
<svg viewBox="0 0 14.5 11.4" style="position: absolute; left: 847.5px; top: 592.6px; width: 14.5px; height: 11.4px;"><rect x="0.6" y="0.6" width="12.6" height="8" fill="#1c2f47" stroke="#e8e8e8" stroke-width="1.1"></rect><path d="M4 10.8H10" stroke="#e8e8e8" stroke-width="1.2"></path><path d="M3 6.6L6 3.6L8 5.4L10.6 2.6" stroke="#4a9af0" stroke-width="1.2" fill="none"></path></svg>
<svg viewBox="0 0 12.7 13.2" style="position: absolute; left: 867.3px; top: 591.6px; width: 12.7px; height: 13.2px;"><path d="M5.6 0.4L10.8 2.2V6.6C10.8 9.6 8.6 11.6 5.6 12.8C2.6 11.6 0.4 9.6 0.4 6.6V2.2Z" fill="#fff"></path><path d="M5.6 0.4V12.8M0.4 6.2H10.8" stroke="#1c2f47" stroke-width="0.9"></path><path d="M9.4 6.6L12.6 12.6H6.2Z" fill="#f2b705"></path></svg>
<svg viewBox="0 0 14.6 10.0" style="position: absolute; left: 885px; top: 593.2px; width: 14.6px; height: 10px;"><rect x="3.4" y="1.4" width="10" height="6.6" fill="none" stroke="#fff" stroke-width="1.1"></rect><rect x="13.4" y="3.4" width="1.2" height="2.6" fill="#fff"></rect><rect x="4.8" y="2.8" width="7" height="3.8" fill="#fff"></rect><path d="M0.6 0.6V5.4M2.6 0.6V5.4M0 5.4H3.2V7.4H0ZM1.6 7.4V10" stroke="#fff" stroke-width="0.9" fill="none"></path></svg>
<svg viewBox="0 0 11.5 11.2" style="position: absolute; left: 907.5px; top: 592.6px; width: 11.5px; height: 11.2px;"><path d="M1 10.4A9.4 9.4 0 0 1 10.4 1M3.8 10.4A6.6 6.6 0 0 1 10.4 3.8M6.6 10.4A3.8 3.8 0 0 1 10.4 6.6" fill="none" stroke="#c9c9c9" stroke-width="1.1"></path><circle cx="9.6" cy="9.8" r="1.2" fill="#d8d8d8"></circle></svg>
<svg viewBox="0 0 9.0 14.0" style="position: absolute; left: 926.2px; top: 591.2px; width: 9px; height: 14px;"><rect x="2.2" y="0.4" width="4.6" height="8.6" rx="2.3" fill="#fff"></rect><path d="M0.6 6.6A3.9 3.9 0 0 0 8.4 6.6M4.5 10.6V13M2.4 13.4H6.6" fill="none" stroke="#fff" stroke-width="1"></path></svg>
<svg viewBox="0 0 14.4 10.8" style="position: absolute; left: 943px; top: 592.8px; width: 14.4px; height: 10.8px;"><path d="M0.6 3.6H3L6 0.8V10L3 7.2H0.6Z" fill="none" stroke="#fff" stroke-width="1"></path><path d="M8 3.2A3 3 0 0 1 8 7.6M10 1.6A5.4 5.4 0 0 1 10 9.2M12 0.2A7.6 7.6 0 0 1 12 10.6" fill="none" stroke="#fff" stroke-width="0.9"></path></svg>
<span class="t wt" style="color: rgb(255, 255, 255); font-size: 9.6px; top: 593.01px; left: 968.2px; transform-origin: 0px 50%; transform: scaleX(0.89);">ΕΛ</span>
<span class="t wt" style="color: rgb(255, 255, 255); font-size: 9.6px; top: 586.6px; left: 998.2px; transform-origin: 0px 50%; transform: scaleX(0.963);">6:57 μμ</span>
<span class="t wt" style="color: rgb(255, 255, 255); font-size: 9.6px; top: 600.41px; left: 993px; transform-origin: 0px 50%; transform: scaleX(0.965);">22/2/2021</span>
<svg viewBox="0 0 14.4 12.6" style="position: absolute; left: 1048px; top: 592.2px; width: 14.4px; height: 12.6px;"><path d="M0.8 0.8H13.4V9.6H8.6L6 12V9.6H0.8Z" fill="#fff"></path><path d="M3 3.4H11.2M3 5.4H11.2M3 7.4H8" stroke="#1b294b" stroke-width="0.9"></path><circle cx="11.6" cy="10.2" r="2.6" fill="#1b294b" stroke="#fff" stroke-width="0.9"></circle></svg>
<!--/STATUS-->
<!--TASKBAR-->
</div>
<div style="background: rgb(234, 100, 22); position: absolute; left: 0px; top: 103.006px; width: 1081.8px; height: 2px;"></div>
<div style="background: rgb(234, 100, 22); position: absolute; left: 1080.4px; top: 104.406px; width: 1.4px; height: 579.8px;"></div>
<div style="overflow: hidden; position: absolute; left: 1070px; top: 439.406px; width: 12px; height: 26px;"><svg viewBox="0 0 9.4 16.4" style="position: absolute; left: 3.6px; top: 5.6px; width: 9.4px; height: 16.4px;"><path d="M0.8 0.8V12.6L3.6 10L5.6 14.6L7.4 13.8L5.4 9.4H9Z" fill="#fff" stroke="#111" stroke-width="1"></path></svg></div>
</div>

<!-- PANEL -->
<div id="panel" class="abs">
<!--PANEL-->
<svg viewBox="0 0 10.4 6.4" style="position: absolute; left: 9.8px; top: 16.8031px; width: 10.4px; height: 6.4px;"><path d="M0.4 0.6L5.2 5.6L10 0.6" fill="none" stroke="#333" stroke-width="1.1"></path></svg>
<span class="t" style="color: rgb(26, 26, 26); font-weight: bold; font-size: 14px; top: 13.01px; left: 27.5px; transform-origin: 0px 50%; transform: scaleX(0.945);">Participants (26)</span>
<svg viewBox="0 0 9.0 8.6" style="position: absolute; left: 358.3px; top: 15.2031px; width: 9px; height: 8.6px;"><path d="M0.4 0.3L8.6 8.3M8.6 0.3L0.4 8.3" stroke="#222" stroke-width="1.2"></path></svg>
<div style="border: 1px solid rgb(201, 201, 201); border-radius: 15px; background: rgb(255, 255, 255); position: absolute; left: 18px; top: 44.7031px; width: 323.6px; height: 29.5px;"></div>
<svg viewBox="0 0 13.1 13.0" style="position: absolute; left: 29.5px; top: 52.8031px; width: 13.1px; height: 13px;"><circle cx="5.4" cy="5.4" r="4.6" fill="none" stroke="#222" stroke-width="1.2"></circle><path d="M8.8 8.8L12.6 12.6" stroke="#222" stroke-width="1.2"></path></svg>
<span class="t" style="color: rgb(102, 102, 102); font-size: 13.6px; top: 53.01px; left: 50px; transform-origin: 0px 50%; transform: scaleX(0.915);">Search</span>
<svg viewBox="0 0 19 16" style="position: absolute; left: 355px; top: 51.2031px; width: 19px; height: 16px;"><path d="M3.5 0.3V15.7M0.4 12L3.5 15.7" fill="none" stroke="#222" stroke-width="1.1"></path><path d="M6.3 3.5H16M6.3 7.8H16M6.3 12.3H16" stroke="#222" stroke-width="1.1"></path></svg>
<div style="overflow: hidden; position: absolute; left: 0px; top: 79.2031px; width: 374px; height: 98px;">
<div style="border-radius: 50%; background: rgb(208, 208, 208); position: absolute; left: 17.2px; top: 7.3px; width: 29.6px; height: 29.6px;"></div>
<svg viewBox="0 0 14.8 16.0" style="position: absolute; left: 24.6px; top: 13.6px; width: 14.8px; height: 16px;"><circle cx="7.35" cy="5.7" r="3.6" fill="none" stroke="#222" stroke-width="1.2"></circle><path d="M1.4 14.7Q0.6 14.7 0.8 13.7Q1.8 9.9 5 9.7H9.8Q13 9.9 14 13.7Q14.2 14.7 13.4 14.7Z" fill="none" stroke="#222" stroke-width="1.2"></path></svg>
<svg viewBox="0 0 12.4 12.4" style="position: absolute; left: 52px; top: 13.7px; width: 12.4px; height: 12.4px;"><path d="M2.8 8.3V4.5A3.4 3.9 0 0 1 9.6 4.5V7.6Q9.4 9.8 6.6 10.4" fill="none" stroke="#222" stroke-width="1.1"></path><ellipse cx="1.7" cy="6.2" rx="1.2" ry="2.1" fill="none" stroke="#222" stroke-width="1"></ellipse><ellipse cx="10.7" cy="6.2" rx="1.2" ry="2.1" fill="none" stroke="#222" stroke-width="1"></ellipse><ellipse cx="5.9" cy="10.6" rx="1.3" ry="0.9" fill="#222" transform="rotate(-20 5.9 10.6)"></ellipse></svg>
<span class="t" style="color: rgb(26, 26, 26); font-size: 14.6px; top: 7.8px; left: 73.8px; transform-origin: 0px 50%; transform: scaleX(0.902);">ΓΑΡΙΟΥ ΑΓΓΕΛΙΚΗ</span>
<span class="t" style="color: rgb(85, 85, 85); font-size: 12.4px; top: 27.7px; left: 74.5px; transform-origin: 0px 50%; transform: scaleX(0.953);">Cohost, me</span>
<svg viewBox="0 0 13.0 9.4" style="position: absolute; left: 300.5px; top: 19.8px; width: 13px; height: 9.4px;"><rect x="0.6" y="0.6" width="8.6" height="8.2" rx="1.6" fill="none" stroke="#222" stroke-width="1.2"></rect><path d="M9.4 3.4L12.2 1.6V7.8L9.4 6" fill="none" stroke="#222" stroke-width="1.2"></path></svg>
<svg viewBox="0 0 10 13" style="position: absolute; left: 344.6px; top: 15.4px; width: 9.4px; height: 12.6px;"><rect x="2.2" y="0.9" width="5.2" height="9.3" rx="2.6" fill="none" stroke="#f4968a" stroke-width="1"></rect><path d="M4.8 10.3V12.2M2.5 12.3H7.1" fill="none" stroke="#ef4f3a" stroke-width="1.1"></path><path d="M9.7 0.8L-0.4 10.9" stroke="#ef4f3a" stroke-width="1.1"></path></svg>
<div style="background: rgb(198, 198, 198); border-radius: 2px 0px 0px 2px; position: absolute; left: 370.7px; top: 3.5px; width: 3.3px; height: 18px;"></div>
<div style="border-radius: 50%; background: linear-gradient(rgb(142, 163, 198) 0px, rgb(169, 185, 210) 35%, rgb(207, 214, 223) 55%, rgb(139, 144, 150) 62%, rgb(90, 102, 112) 75%, rgb(72, 82, 94) 100%); position: absolute; left: 17.2px; top: 51.2px; width: 29.6px; height: 29.6px;"></div>
<div style="background: rgb(232, 228, 216); position: absolute; left: 30px; top: 57px; width: 1.4px; height: 11px;"></div>
<svg viewBox="0 0 12.4 12.4" style="position: absolute; left: 52px; top: 57.7px; width: 12.4px; height: 12.4px;"><path d="M2.8 8.3V4.5A3.4 3.9 0 0 1 9.6 4.5V7.6Q9.4 9.8 6.6 10.4" fill="none" stroke="#222" stroke-width="1.1"></path><ellipse cx="1.7" cy="6.2" rx="1.2" ry="2.1" fill="none" stroke="#222" stroke-width="1"></ellipse><ellipse cx="10.7" cy="6.2" rx="1.2" ry="2.1" fill="none" stroke="#222" stroke-width="1"></ellipse><ellipse cx="5.9" cy="10.6" rx="1.3" ry="0.9" fill="#222" transform="rotate(-20 5.9 10.6)"></ellipse></svg>
<span class="t" style="color: rgb(26, 26, 26); font-size: 14.6px; top: 51.91px; left: 73.8px; transform-origin: 0px 50%; transform: scaleX(0.918);">ΝΙΚΟΛΑΚΟΠΟΥΛΟΥ ΑΙΚΑΤΕΡ...</span>
<span class="t" style="color: rgb(85, 85, 85); font-size: 12.4px; top: 71.91px; left: 74.5px; transform-origin: 0px 50%; transform: scaleX(0.961);">Host</span>
<svg viewBox="0 0 13.0 9.4" style="position: absolute; left: 300.5px; top: 63.8px; width: 13px; height: 9.4px;"><rect x="0.6" y="0.6" width="8.6" height="8.2" rx="1.6" fill="none" stroke="#222" stroke-width="1.2"></rect><path d="M9.4 3.4L12.2 1.6V7.8L9.4 6" fill="none" stroke="#222" stroke-width="1.2"></path></svg>
<svg viewBox="0 0 10 13" style="position: absolute; left: 344.6px; top: 59.4px; width: 9.4px; height: 12.6px;"><rect x="2.2" y="0.9" width="5.2" height="9.3" rx="2.6" fill="none" stroke="#f4968a" stroke-width="1"></rect><path d="M4.8 10.3V12.2M2.5 12.3H7.1" fill="none" stroke="#ef4f3a" stroke-width="1.1"></path><path d="M9.7 0.8L-0.4 10.9" stroke="#ef4f3a" stroke-width="1.1"></path></svg>
<div style="border-radius: 50%; background: rgb(208, 208, 208); position: absolute; left: 17.2px; top: 95px; width: 29.6px; height: 29.6px;"></div>
</div>
<div style="border-radius: 16px; background: rgb(222, 222, 222); position: absolute; left: 15px; top: 187.203px; width: 149px; height: 32px;"></div>
<span class="t" style="color: rgb(26, 26, 26); font-size: 14px; top: 195.91px; left: 64.2px; transform-origin: 0px 50%; transform: scaleX(1.012);">Mute all</span>
<div style="border-radius: 16px; background: rgb(222, 222, 222); position: absolute; left: 174px; top: 187.203px; width: 149px; height: 32px;"></div>
<span class="t" style="color: rgb(26, 26, 26); font-size: 14px; top: 195.91px; left: 215.3px; transform-origin: 0px 50%; transform: scaleX(0.994);">Unmute all</span>
<div style="border-radius: 50%; background: rgb(222, 222, 222); position: absolute; left: 333.2px; top: 187.203px; width: 31.6px; height: 32px;"></div>
<div style="background: rgb(34, 34, 34); border-radius: 50%; position: absolute; left: 343.4px; top: 202.603px; width: 1.8px; height: 1.8px;"></div>
<div style="background: rgb(34, 34, 34); border-radius: 50%; position: absolute; left: 347.8px; top: 202.603px; width: 1.8px; height: 1.8px;"></div>
<div style="background: rgb(34, 34, 34); border-radius: 50%; position: absolute; left: 352.2px; top: 202.603px; width: 1.8px; height: 1.8px;"></div>
<div style="background: rgb(210, 210, 210); position: absolute; left: 2px; top: 228.803px; width: 372px; height: 1.8px;"></div>
<svg viewBox="0 0 4.4 7.8" style="position: absolute; left: 12.6px; top: 247.203px; width: 4.4px; height: 7.8px;"><path d="M0.6 0.5L3.8 3.9L0.6 7.3" fill="none" stroke="#e8501e" stroke-width="1"></path></svg>
<span class="t" style="color: rgb(226, 71, 15); font-weight: bold; font-size: 14px; top: 243.82px; left: 27.5px; transform-origin: 0px 50%; transform: scaleX(0.916);">Chat</span>
<svg viewBox="0 0 9.0 8.6" style="position: absolute; left: 358.3px; top: 246.203px; width: 9px; height: 8.6px;"><path d="M0.4 0.3L8.6 8.3M8.6 0.3L0.4 8.3" stroke="#222" stroke-width="1.2"></path></svg>
<div style="background: rgb(227, 227, 227); position: absolute; left: 2px; top: 269.803px; width: 372px; height: 1px;"></div>
<svg viewBox="0 0 10.4 6.4" style="position: absolute; left: 9.8px; top: 289.803px; width: 10.4px; height: 6.4px;"><path d="M0.4 0.6L5.2 5.6L10 0.6" fill="none" stroke="#333" stroke-width="1.1"></path></svg>
<span class="t" style="color: rgb(26, 26, 26); font-weight: bold; font-size: 14px; top: 286.11px; left: 27.5px; transform-origin: 0px 50%; transform: scaleX(0.923);">Polling</span>
<svg viewBox="0 0 9.0 8.6" style="position: absolute; left: 358.3px; top: 288.203px; width: 9px; height: 8.6px;"><path d="M0.4 0.3L8.6 8.3M8.6 0.3L0.4 8.3" stroke="#222" stroke-width="1.2"></path></svg>
<div style="background: rgb(247, 247, 247); position: absolute; left: 2px; top: 321.203px; width: 372px; height: 29.6px;"></div>
<span class="t" style="color: rgb(26, 26, 26); font-size: 13.2px; top: 331.41px; left: 14.9px; transform-origin: 0px 50%; transform: scaleX(1.03);">Remaining time:</span>
<span class="t" style="color: rgb(43, 176, 76); font-size: 13.2px; top: 331.41px; left: 123.3px; transform-origin: 0px 50%; transform: scaleX(0.982);">3:51</span>
<span class="t" style="color: rgb(26, 26, 26); font-size: 13.2px; top: 331.41px; left: 160px; transform-origin: 0px 50%; transform: scaleX(1.035);">Time limit:</span>
<span class="t" style="color: rgb(232, 80, 30); font-size: 13.2px; top: 331.41px; left: 232.5px; transform-origin: 0px 50%; transform: scaleX(1.021);">5:00</span>
<span class="t" style="color: rgb(68, 68, 68); font-size: 12px; top: 363.11px; left: 14.9px; transform-origin: 0px 50%; transform: scaleX(0.961);">Poll results:</span>
<div style="background: rgb(248, 248, 248); position: absolute; left: 2px; top: 382.803px; width: 358.4px; height: 29.4px;"></div>
<div style="background: rgb(228, 228, 228); position: absolute; left: 202px; top: 382.803px; width: 1px; height: 29.4px;"></div>
<div style="background: rgb(228, 228, 228); position: absolute; left: 273px; top: 382.803px; width: 1px; height: 29.4px;"></div>
<div style="background: rgb(228, 228, 228); position: absolute; left: 360px; top: 382.803px; width: 1px; height: 29.4px;"></div>
<span class="t" style="color: rgb(85, 85, 85); font-size: 14px; top: 389.91px; left: 16px; transform-origin: 0px 50%; transform: scaleX(0.977);">Questions</span>
<span class="t" style="color: rgb(85, 85, 85); font-size: 14px; top: 389.91px; left: 217px; transform-origin: 0px 50%; transform: scaleX(0.908);">Results</span>
<span class="t" style="color: rgb(85, 85, 85); font-size: 14px; top: 389.91px; left: 288.2px; transform-origin: 0px 50%; transform: scaleX(0.946);">Bar Graph</span>
<div style="background: rgb(241, 241, 241); position: absolute; left: 362.2px; top: 382.803px; width: 11.8px; height: 437.4px;"></div>
<svg viewBox="0 0 6.6 4.4" style="position: absolute; left: 365px; top: 388.803px; width: 6.6px; height: 4.4px;"><path d="M0.6 4L3.3 0.8L6 4" fill="none" stroke="#444" stroke-width="1.4"></path></svg>
<div style="background: rgb(193, 193, 193); position: absolute; left: 362.2px; top: 433.403px; width: 11.8px; height: 134.5px;"></div>
<svg viewBox="0 0 6.6 4.4" style="position: absolute; left: 365px; top: 809.803px; width: 6.6px; height: 4.4px;"><path d="M0.6 0.6L3.3 3.8L6 0.6" fill="none" stroke="#444" stroke-width="1.4"></path></svg>
<div style="overflow: hidden; position: absolute; left: 0px; top: 412.203px; width: 362px; height: 408.2px;">
<div style="background: rgb(236, 236, 236); border: 1px solid rgb(201, 201, 201); border-radius: 2.5px; position: absolute; left: 18px; top: 11px; width: 20px; height: 20px;"></div>
<span class="t" style="color: rgb(85, 85, 85); font-size: 14px; top: 13.81px; left: 47px;">C.</span>
<span class="t" style="color: rgb(85, 85, 85); font-size: 14px; top: 13.81px; left: 70.6px; transform-origin: 0px 50%; transform: scaleX(0.993);">Χάνουν χρόνο, χω...</span>
<span class="t" style="color: rgb(85, 85, 85); font-size: 14px; top: 13.81px; left: 221.4px; transform-origin: 0px 50%; transform: scaleX(0.963);">1/23 (...</span>
<div style="background: rgb(232, 232, 232); border-radius: 4.2px; position: absolute; left: 288.2px; top: 16.8px; width: 59.4px; height: 8.4px;"></div>
<div style="background: rgb(10, 159, 220); border-radius: 1.3px / 4.2px; position: absolute; left: 288.2px; top: 16.8px; width: 2.6px; height: 8.4px;"></div>
<div style="background: rgb(236, 236, 236); border: 1px solid rgb(201, 201, 201); border-radius: 2.5px; position: absolute; left: 18px; top: 44px; width: 20px; height: 20px;"></div>
<svg viewBox="0 0 15.0 12" style="position: absolute; left: 20.6px; top: 48px; width: 15px; height: 12px;"><path d="M1.8 5.2L5.9 9.1L14.1 0.5" fill="none" stroke="#9e9e9e" stroke-width="1.4"></path></svg>
<span class="t" style="color: rgb(85, 85, 85); font-size: 14px; top: 46.81px; left: 47px;">D.</span>
<span class="t" style="color: rgb(85, 85, 85); font-size: 14px; top: 46.81px; left: 72.4px; transform-origin: 0px 50%; transform: scaleX(0.982);">Εμπλέκονται σωμα...</span>
<span class="t" style="color: rgb(85, 85, 85); font-size: 14px; top: 46.81px; left: 221.4px; transform-origin: 0px 50%; transform: scaleX(0.991);">11/23 ...</span>
<div style="background: rgb(232, 232, 232); border-radius: 4.2px; position: absolute; left: 288.2px; top: 49.8px; width: 59.4px; height: 8.4px;"></div>
<div style="background: rgb(10, 159, 220); border-radius: 4.2px; position: absolute; left: 288.2px; top: 49.8px; width: 28.4px; height: 8.4px;"></div>
<div style="background: rgb(236, 236, 236); border: 1px solid rgb(201, 201, 201); border-radius: 2.5px; position: absolute; left: 18px; top: 77px; width: 20px; height: 20px;"></div>
<svg viewBox="0 0 15.0 12" style="position: absolute; left: 20.6px; top: 81px; width: 15px; height: 12px;"><path d="M1.8 5.2L5.9 9.1L14.1 0.5" fill="none" stroke="#9e9e9e" stroke-width="1.4"></path></svg>
<span class="t" style="color: rgb(85, 85, 85); font-size: 14px; top: 79.81px; left: 47px;">E.</span>
<span class="t" style="color: rgb(85, 85, 85); font-size: 14px; top: 79.81px; left: 69.4px; transform-origin: 0px 50%; transform: scaleX(0.999);">Επικοινωνούν τις ιδ...</span>
<span class="t" style="color: rgb(85, 85, 85); font-size: 14px; top: 79.81px; left: 221.4px; transform-origin: 0px 50%; transform: scaleX(0.97);">12/23 ...</span>
<div style="background: rgb(232, 232, 232); border-radius: 4.2px; position: absolute; left: 288.2px; top: 82.8px; width: 59.4px; height: 8.4px;"></div>
<div style="background: rgb(10, 159, 220); border-radius: 4.2px; position: absolute; left: 288.2px; top: 82.8px; width: 31px; height: 8.4px;"></div>
<div style="background: rgb(236, 236, 236); border: 1px solid rgb(201, 201, 201); border-radius: 2.5px; position: absolute; left: 18px; top: 110px; width: 20px; height: 20px;"></div>
<svg viewBox="0 0 15.0 12" style="position: absolute; left: 20.6px; top: 114px; width: 15px; height: 12px;"><path d="M1.8 5.2L5.9 9.1L14.1 0.5" fill="none" stroke="#9e9e9e" stroke-width="1.4"></path></svg>
<span class="t" style="color: rgb(85, 85, 85); font-size: 14px; top: 112.81px; left: 47px;">F.</span>
<span class="t" style="color: rgb(85, 85, 85); font-size: 14px; top: 112.81px; left: 69.4px; transform-origin: 0px 50%; transform: scaleX(0.989);">Εμπλέκονται σε δια...</span>
<span class="t" style="color: rgb(85, 85, 85); font-size: 14px; top: 112.81px; left: 221.4px; transform-origin: 0px 50%; transform: scaleX(0.97);">14/23 ...</span>
<div style="background: rgb(232, 232, 232); border-radius: 4.2px; position: absolute; left: 288.2px; top: 115.8px; width: 59.4px; height: 8.4px;"></div>
<div style="background: rgb(10, 159, 220); border-radius: 4.2px; position: absolute; left: 288.2px; top: 115.8px; width: 36.2px; height: 8.4px;"></div>
<div style="background: rgb(236, 236, 236); border: 1px solid rgb(201, 201, 201); border-radius: 2.5px; position: absolute; left: 18px; top: 143px; width: 20px; height: 20px;"></div>
<span class="t" style="color: rgb(85, 85, 85); font-size: 14px; top: 145.81px; left: 47px;">G.</span>
<span class="t" style="color: rgb(85, 85, 85); font-size: 14px; top: 145.81px; left: 72.4px; transform-origin: 0px 50%; transform: scaleX(1.015);">Δεν ασκούνται στη...</span>
<span class="t" style="color: rgb(85, 85, 85); font-size: 14px; top: 145.81px; left: 221.4px; transform-origin: 0px 50%; transform: scaleX(0.963);">2/23 (...</span>
<div style="background: rgb(232, 232, 232); border-radius: 4.2px; position: absolute; left: 288.2px; top: 148.8px; width: 59.4px; height: 8.4px;"></div>
<div style="background: rgb(10, 159, 220); border-radius: 2.6px / 4.2px; position: absolute; left: 288.2px; top: 148.8px; width: 5.2px; height: 8.4px;"></div>
<span class="t" style="color: rgb(85, 85, 85); font-size: 14px; top: 178.81px; left: 50.3px; transform-origin: 0px 50%; transform: scaleX(0.984);">No Answer</span>
<span class="t" style="color: rgb(85, 85, 85); font-size: 14px; top: 178.81px; left: 221.4px; transform-origin: 0px 50%; transform: scaleX(0.963);">0/23 (...</span>
<div style="background: rgb(232, 232, 232); border-radius: 4.2px; position: absolute; left: 288.2px; top: 181.8px; width: 59.4px; height: 8.4px;"></div>
<span class="t" style="color: rgb(85, 85, 85); font-size: 14px; top: 211.81px; left: 19.8px;">2.</span>
<span class="t" style="color: rgb(85, 85, 85); font-size: 14px; top: 211.81px; left: 38.5px; transform-origin: 0px 50%; transform: scaleX(1.016);">Πολυπολιτισμική κοινων...</span>
<span class="t" style="color: rgb(85, 85, 85); font-size: 14px; top: 244.81px; left: 50.3px; transform-origin: 0px 50%; transform: scaleX(0.984);">No Answer</span>
<span class="t" style="color: rgb(85, 85, 85); font-size: 14px; top: 244.81px; left: 221.4px; transform-origin: 0px 50%; transform: scaleX(0.98);">23/23 ...</span>
<div style="background: rgb(232, 232, 232); border-radius: 4.2px; position: absolute; left: 288.2px; top: 247.8px; width: 59.4px; height: 8.4px;"></div>
<div style="background: rgb(10, 159, 220); border-radius: 4.2px; position: absolute; left: 288.2px; top: 247.8px; width: 59.4px; height: 8.4px;"></div>
<span class="t" style="color: rgb(85, 85, 85); font-size: 14px; top: 277.81px; left: 19.2px;">3.</span>
<span class="t" style="color: rgb(85, 85, 85); font-size: 14px; top: 277.81px; left: 38.5px; transform-origin: 0px 50%; transform: scaleX(1.039);">διαφορετική γλώσσα</span>
<div style="background: rgb(236, 236, 236); border: 1px solid rgb(201, 201, 201); border-radius: 2.5px; position: absolute; left: 18px; top: 308px; width: 20px; height: 20px;"></div>
<span class="t" style="color: rgb(85, 85, 85); font-size: 14px; top: 310.81px; left: 47.3px;">A.</span>
<span class="t" style="color: rgb(85, 85, 85); font-size: 14px; top: 310.81px; left: 71px; transform-origin: 0px 50%; transform: scaleX(1.062);">διαφορετική ηλικία;</span>
<span class="t" style="color: rgb(85, 85, 85); font-size: 14px; top: 310.81px; left: 221.4px; transform-origin: 0px 50%; transform: scaleX(0.963);">6/23 (...</span>
<div style="background: rgb(232, 232, 232); border-radius: 4.2px; position: absolute; left: 288.2px; top: 313.8px; width: 59.4px; height: 8.4px;"></div>
<div style="background: rgb(10, 159, 220); border-radius: 4.2px; position: absolute; left: 288.2px; top: 313.8px; width: 15.5px; height: 8.4px;"></div>
<div style="background: rgb(236, 236, 236); border: 1px solid rgb(201, 201, 201); border-radius: 2.5px; position: absolute; left: 18px; top: 341px; width: 20px; height: 20px;"></div>
<span class="t" style="color: rgb(85, 85, 85); font-size: 14px; top: 343.81px; left: 47.3px;">B.</span>
<span class="t" style="color: rgb(85, 85, 85); font-size: 14px; top: 343.81px; left: 71px; transform-origin: 0px 50%; transform: scaleX(1.052);">διαφορετικό φύλο;</span>
<span class="t" style="color: rgb(85, 85, 85); font-size: 14px; top: 343.81px; left: 221.4px; transform-origin: 0px 50%; transform: scaleX(0.963);">2/23 (...</span>
<div style="background: rgb(232, 232, 232); border-radius: 4.2px; position: absolute; left: 288.2px; top: 346.8px; width: 59.4px; height: 8.4px;"></div>
<div style="background: rgb(10, 159, 220); border-radius: 2.6px / 4.2px; position: absolute; left: 288.2px; top: 346.8px; width: 5.2px; height: 8.4px;"></div>
<div style="background: rgb(236, 236, 236); border: 1px solid rgb(201, 201, 201); border-radius: 2.5px; position: absolute; left: 18px; top: 374px; width: 20px; height: 20px;"></div>
<span class="t" style="color: rgb(85, 85, 85); font-size: 14px; top: 376.81px; left: 47.3px;">C.</span>
<span class="t" style="color: rgb(85, 85, 85); font-size: 14px; top: 376.81px; left: 71px; transform-origin: 0px 50%; transform: scaleX(1.022);">διαφορετική θρησκ...</span>
<span class="t" style="color: rgb(85, 85, 85); font-size: 14px; top: 376.81px; left: 221.4px; transform-origin: 0px 50%; transform: scaleX(0.963);">7/23 (...</span>
<div style="background: rgb(232, 232, 232); border-radius: 4.2px; position: absolute; left: 288.2px; top: 379.8px; width: 59.4px; height: 8.4px;"></div>
<div style="background: rgb(10, 159, 220); border-radius: 4.2px; position: absolute; left: 288.2px; top: 379.8px; width: 18.1px; height: 8.4px;"></div>
<div style="background: rgb(236, 236, 236); border: 1px solid rgb(201, 201, 201); border-radius: 2.5px; position: absolute; left: 18px; top: 407px; width: 20px; height: 20px;"></div>
</div>
<div style="background: rgb(227, 227, 227); position: absolute; left: 2px; top: 820.203px; width: 372px; height: 1px;"></div>
<div style="background: rgb(236, 236, 236); border-radius: 16px; position: absolute; left: 286.1px; top: 832.003px; width: 77.7px; height: 32px;"></div>
<span class="t" style="color: rgb(179, 179, 179); font-size: 13.4px; top: 840.92px; left: 306px; transform-origin: 0px 50%; transform: scaleX(0.919);">Submit</span>
<div style="background: rgb(227, 227, 227); position: absolute; left: 2px; top: 875.403px; width: 372px; height: 1px;"></div>
<span class="t" style="color: rgb(85, 85, 85); font-size: 13.6px; top: 886.62px; left: 131.7px; transform-origin: 0px 50%; transform: scaleX(0.98);">The poll has ended.</span>
<!--/PANEL-->
</div>

<!-- BOTTOM -->
<div id="bottom" class="abs">
<!--BOTTOM-->
<div style="background: rgb(255, 255, 255); border-radius: 22px; position: absolute; left: 454.8px; top: 8.60938px; width: 125.7px; height: 43.8px;"></div>
<svg viewBox="0 0 10 13" style="position: absolute; left: 473.4px; top: 23.6094px; width: 11px; height: 14.6px;"><rect x="2.2" y="0.9" width="5.2" height="9.3" rx="2.6" fill="none" stroke="#f4968a" stroke-width="1"></rect><path d="M4.8 10.3V12.2M2.5 12.3H7.1" fill="none" stroke="#ef4f3a" stroke-width="1.1"></path><path d="M9.7 0.8L-0.4 10.9" stroke="#ef4f3a" stroke-width="1.1"></path></svg>
<span class="t" style="color: rgb(26, 26, 26); font-size: 16px; top: 23.42px; left: 495px; transform-origin: 0px 50%; transform: scaleX(0.991);">Unmute</span>
<svg viewBox="0 0 8.8 5.0" style="position: absolute; left: 564.6px; top: 28.0094px; width: 8.8px; height: 5px;"><path d="M0.5 0.5L4.4 4.4L8.3 0.5" fill="none" stroke="#222" stroke-width="1.2"></path></svg>
<div style="background: rgb(255, 255, 255); border-radius: 22px; position: absolute; left: 588.7px; top: 8.60938px; width: 143.7px; height: 43.8px;"></div>
<svg viewBox="0 0 17.0 12.4" style="position: absolute; left: 605.6px; top: 24.6094px; width: 17px; height: 12.4px;"><rect x="0.6" y="0.6" width="11.4" height="11" rx="2" fill="none" stroke="#222" stroke-width="1.2"></rect><path d="M12.2 4.4L15.8 2.2V10L12.2 7.8" fill="none" stroke="#222" stroke-width="1.2"></path><circle cx="3.6" cy="3.8" r="1.2" fill="#2bb04c"></circle></svg>
<span class="t" style="color: rgb(26, 26, 26); font-size: 16px; top: 23.42px; left: 630px; transform-origin: 0px 50%; transform: scaleX(0.965);">Stop video</span>
<svg viewBox="0 0 8.8 5.0" style="position: absolute; left: 716.4px; top: 28.0094px; width: 8.8px; height: 5px;"><path d="M0.5 0.5L4.4 4.4L8.3 0.5" fill="none" stroke="#222" stroke-width="1.2"></path></svg>
<div style="background: rgb(222, 222, 222); border-radius: 22px; position: absolute; left: 741.4px; top: 8.60938px; width: 95.6px; height: 43.8px;"></div>
<svg viewBox="0 0 15.8 14.4" style="position: absolute; left: 754.8px; top: 23.2094px; width: 15.8px; height: 14.4px;"><path d="M4.6 4.6H2.6A2 2 0 0 0 0.6 6.6V11.8A2 2 0 0 0 2.6 13.8H13.2A2 2 0 0 0 15.2 11.8V6.6A2 2 0 0 0 13.2 4.6H11.2" fill="none" stroke="#b3b3b3" stroke-width="1.1"></path><path d="M7.9 10V1M5.4 3.4L7.9 0.8L10.4 3.4" fill="none" stroke="#b3b3b3" stroke-width="1.1"></path></svg>
<span class="t" style="color: rgb(179, 179, 179); font-size: 16px; top: 23.42px; left: 779.2px; transform-origin: 0px 50%; transform: scaleX(0.939);">Share</span>
<div style="background: rgb(255, 255, 255); border-radius: 50%; position: absolute; left: 845.4px; top: 8.60938px; width: 43.6px; height: 43.8px;"></div>
<svg viewBox="0 0 17.2 16.4" style="position: absolute; left: 858.6px; top: 22.6094px; width: 17.2px; height: 16.4px;"><path d="M11 1.6A7.4 7.4 0 1 0 15.4 6.4" fill="none" stroke="#222" stroke-width="1.2"></path><path d="M4.6 9.8A3.8 3.8 0 0 0 11.6 9.8" fill="none" stroke="#222" stroke-width="1.2"></path><circle cx="5.6" cy="6.4" r="1" fill="#222"></circle><circle cx="10.6" cy="6.4" r="1" fill="#222"></circle><path d="M14.4 0V5M11.9 2.5H16.9" stroke="#222" stroke-width="1.1"></path></svg>
<div style="background: rgb(255, 255, 255); border-radius: 50%; position: absolute; left: 897.2px; top: 8.60938px; width: 43.6px; height: 43.8px;"></div>
<div style="background: rgb(34, 34, 34); border-radius: 50%; position: absolute; left: 911.6px; top: 29.6094px; width: 2px; height: 2px;"></div>
<div style="background: rgb(34, 34, 34); border-radius: 50%; position: absolute; left: 917.6px; top: 29.6094px; width: 2px; height: 2px;"></div>
<div style="background: rgb(34, 34, 34); border-radius: 50%; position: absolute; left: 923.6px; top: 29.6094px; width: 2px; height: 2px;"></div>
<div style="background: rgb(212, 55, 28); border-radius: 50%; position: absolute; left: 948.7px; top: 8.60938px; width: 43.9px; height: 43.8px;"></div>
<svg viewBox="0 0 12.0 12.0" style="position: absolute; left: 964.6px; top: 24.4094px; width: 12px; height: 12px;"><path d="M0.6 0.6L11.4 11.4M11.4 0.6L0.6 11.4" stroke="#fff" stroke-width="1.3"></path></svg>
<div style="background: rgb(255, 255, 255); border-radius: 20px; position: absolute; left: 1213px; top: 11.0094px; width: 235.8px; height: 39.4px;"></div>
<div style="background: rgb(236, 236, 236); position: absolute; left: 1331px; top: 11.0094px; width: 1px; height: 39.4px;"></div>
<div style="background: rgb(236, 236, 236); position: absolute; left: 1408px; top: 11.0094px; width: 1px; height: 39.4px;"></div>
<svg viewBox="0 0 16.4 15.4" style="position: absolute; left: 1225px; top: 22.6094px; width: 16.4px; height: 15.4px;"><circle cx="8.6" cy="4.2" r="3.6" fill="none" stroke="#0b6fa3" stroke-width="1.2"></circle><path d="M8.6 14.6H0.8C0.8 11.6 2.4 9.4 6.4 9.2" fill="none" stroke="#0b6fa3" stroke-width="1.2"></path><path d="M10.2 9.8H16M10.2 12.2H16M10.2 14.6H16" stroke="#0b6fa3" stroke-width="1.1"></path></svg>
<span class="t" style="color: rgb(11, 111, 163); font-size: 14px; top: 23.01px; left: 1249.5px; transform-origin: 0px 50%; transform: scaleX(0.957);">Participants</span>
<svg viewBox="0 0 16.4 16.2" style="position: absolute; left: 1344px; top: 22.2094px; width: 16.4px; height: 16.2px;"><path d="M8.6 0.8A7 7 0 0 0 2.6 11.4L1 15.2L5.2 13.8A7 7 0 1 0 8.6 0.8Z" fill="none" stroke="#0b6fa3" stroke-width="1.2"></path></svg>
<span class="t" style="color: rgb(11, 111, 163); font-size: 14px; top: 23.01px; left: 1368px; transform-origin: 0px 50%; transform: scaleX(0.98);">Chat</span>
<div style="background: rgb(34, 34, 34); border-radius: 50%; position: absolute; left: 1421.6px; top: 30.0094px; width: 1.8px; height: 1.8px;"></div>
<div style="background: rgb(34, 34, 34); border-radius: 50%; position: absolute; left: 1427.4px; top: 30.0094px; width: 1.8px; height: 1.8px;"></div>
<div style="background: rgb(34, 34, 34); border-radius: 50%; position: absolute; left: 1433.2px; top: 30.0094px; width: 1.8px; height: 1.8px;"></div>
<!--/BOTTOM-->
</div>

</div>


</body></html>
